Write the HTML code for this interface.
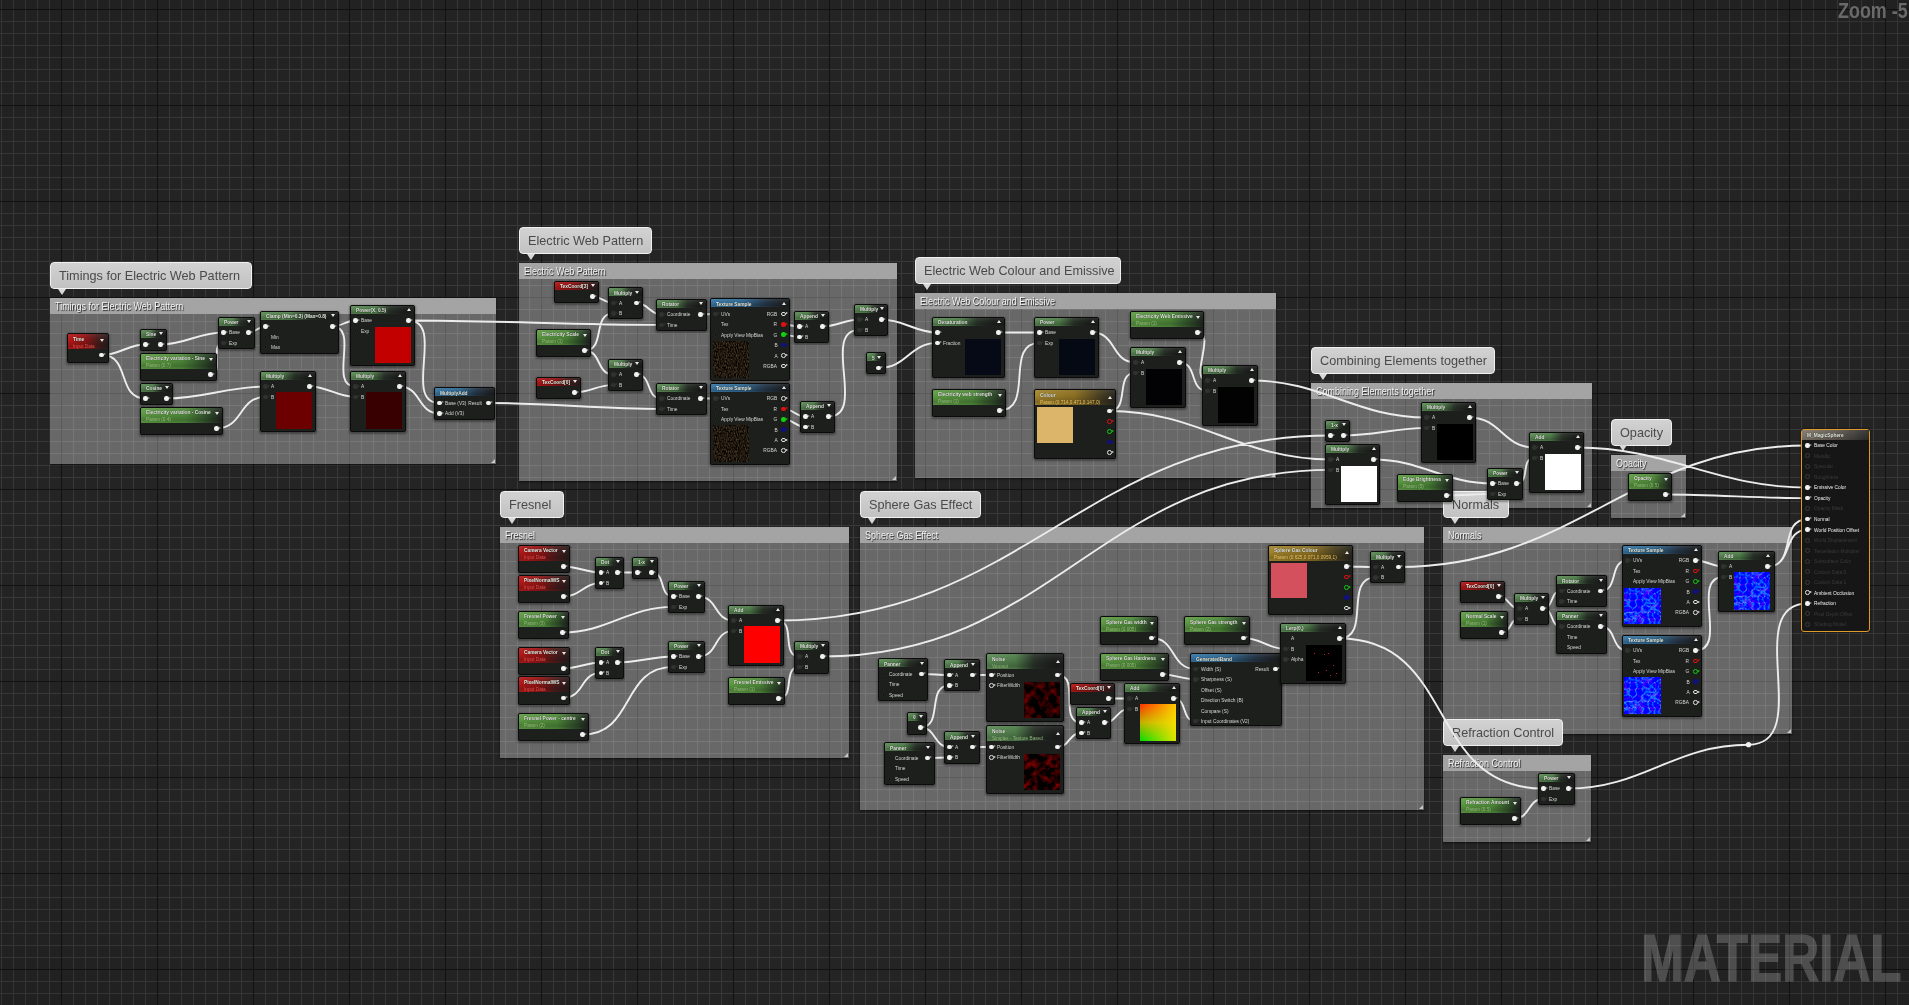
<!DOCTYPE html><html><head><meta charset="utf-8"><title>Material Graph</title><style>
*{margin:0;padding:0;box-sizing:border-box}
html,body{width:1909px;height:1005px;overflow:hidden;background:#242424}
body{position:relative;font-family:"Liberation Sans",sans-serif}
#bg{position:absolute;left:0;top:0;width:1909px;height:1005px;
background-image:
 linear-gradient(to right,#121212 1px,transparent 1px),
 linear-gradient(to bottom,#121212 1px,transparent 1px),
 linear-gradient(to right,#393939 1px,transparent 1px),
 linear-gradient(to bottom,#393939 1px,transparent 1px);
background-size:96px 96px,96px 96px,12px 12px,12px 12px;
background-position:61px 9px,61px 9px,1px 9px,1px 9px;}
.cb{position:absolute;background:rgba(255,255,255,0.315);box-shadow:0 1px 2px rgba(0,0,0,.6)}
.ch{position:absolute;left:0;top:0;right:0;height:16px;background:#a4a4a4}
.ct{position:absolute;left:5px;top:2px;font-size:10.5px;color:#f4f4f4;white-space:nowrap;text-shadow:1px 1px 1px #1a1a1a;transform:scaleX(.855);transform-origin:0 0}
.bb{position:absolute;background:linear-gradient(#d2d2d2,#c2c2c2);border:1px solid #f0f0f0;border-radius:4px;}
.bt{position:absolute;left:8.3px;top:5px;font-size:13px;color:#4a4a4a;white-space:nowrap;transform:scaleX(.975);transform-origin:0 0}
.tail{position:absolute;width:0;height:0;border-left:4px solid transparent;border-right:4px solid transparent;border-top:6px solid #d8d8d8}
.grip{position:absolute;right:1px;bottom:1px;width:0;height:0;border-left:4px solid transparent;border-bottom:4px solid #c8c8c8}
.n{position:absolute;background:#1d1f1d;border:1px solid #0b0b0b;border-radius:2px;box-shadow:0 1px 2px 1px rgba(0,0,0,.35);overflow:hidden}
.h{position:absolute;left:0;top:0;right:0}
.t{position:absolute;left:5px;top:1.5px;font-size:5.8px;font-weight:bold;line-height:6px;color:#e8eee4;white-space:nowrap;text-shadow:0 0 1px #000;transform:scaleX(.83);transform-origin:0 0}
.st{position:absolute;left:5px;top:8.5px;font-size:5.6px;line-height:6px;white-space:nowrap;transform:scaleX(.84);transform-origin:0 0}
.tri{position:absolute;width:0;height:0;border-left:2.5px solid transparent;border-right:2.5px solid transparent}
.l{position:absolute;font-size:5.6px;line-height:6px;color:#d6d6d6;white-space:nowrap;transform:scaleX(.86);transform-origin:0 0}
.lr{transform-origin:100% 0}
.p{position:absolute;border-radius:50%}
.pa{position:absolute;width:0;height:0;border-top:1.5px solid transparent;border-bottom:1.5px solid transparent}
.pv{position:absolute}
</style></head><body><div id="bg"></div><div style="position:absolute;left:0;top:0;width:1909px;height:1005px;background:radial-gradient(ellipse 75% 75% at 50% 50%,rgba(0,0,0,0) 60%,rgba(0,0,0,.12) 100%)"></div><div class="cb" style="left:50px;top:298px;width:445.5px;height:166px"><div class="ch"><div class="ct">Timings for Electric Web Pattern</div></div><div class="grip"></div></div><div class="bb" style="left:50px;top:262.3px;width:202px;height:27px"><div class="bt">Timings for Electric Web Pattern</div></div><div class="tail" style="left:58px;top:288.8px"></div><div class="cb" style="left:519px;top:263px;width:377.5px;height:217.5px"><div class="ch"><div class="ct">Electric Web Pattern</div></div><div class="grip"></div></div><div class="bb" style="left:519px;top:227.3px;width:133px;height:27px"><div class="bt">Electric Web Pattern</div></div><div class="tail" style="left:527px;top:253.8px"></div><div class="cb" style="left:914.5px;top:293px;width:361px;height:185px"><div class="ch"><div class="ct">Electric Web Colour and Emissive</div></div><div class="grip"></div></div><div class="bb" style="left:914.5px;top:257.3px;width:206.5px;height:27px"><div class="bt">Electric Web Colour and Emissive</div></div><div class="tail" style="left:922.5px;top:283.8px"></div><div class="cb" style="left:1310.5px;top:383px;width:281px;height:124.5px"><div class="ch"><div class="ct">Combining Elements together</div></div><div class="grip"></div></div><div class="bb" style="left:1310.5px;top:347.3px;width:184.5px;height:27px"><div class="bt">Combining Elements together</div></div><div class="tail" style="left:1318.5px;top:373.8px"></div><div class="cb" style="left:1610.5px;top:454.5px;width:75px;height:63.5px"><div class="ch"><div class="ct">Opacity</div></div><div class="grip"></div></div><div class="bb" style="left:1610.5px;top:418.8px;width:61.5px;height:27px"><div class="bt">Opacity</div></div><div class="tail" style="left:1618.5px;top:445.3px"></div><div class="cb" style="left:500px;top:527px;width:348.5px;height:231px"><div class="ch"><div class="ct">Fresnel</div></div><div class="grip"></div></div><div class="bb" style="left:500px;top:491.3px;width:64px;height:27px"><div class="bt">Fresnel</div></div><div class="tail" style="left:508px;top:517.8px"></div><div class="cb" style="left:860px;top:527px;width:564px;height:282.5px"><div class="ch"><div class="ct">Sphere Gas Effect</div></div><div class="grip"></div></div><div class="bb" style="left:860px;top:491.3px;width:121px;height:27px"><div class="bt">Sphere Gas Effect</div></div><div class="tail" style="left:868px;top:517.8px"></div><div class="cb" style="left:1443px;top:527px;width:348.5px;height:206.5px"><div class="ch"><div class="ct">Normals</div></div><div class="grip"></div></div><div class="bb" style="left:1443px;top:491.3px;width:66px;height:27px"><div class="bt">Normals</div></div><div class="tail" style="left:1451px;top:517.8px"></div><div class="cb" style="left:1442.5px;top:755px;width:148px;height:86.5px"><div class="ch"><div class="ct">Refraction Control</div></div><div class="grip"></div></div><div class="bb" style="left:1442.5px;top:719.3px;width:120.5px;height:27px"><div class="bt">Refraction Control</div></div><div class="tail" style="left:1450.5px;top:745.8px"></div><svg style="position:absolute;left:0;top:0" width="1909" height="1005"><path d="M101.8 355C119.87 355 127.43 344.5 145.5 344.5M101.8 355C130.87 355 116.43 398.5 145.5 398.5M160.3 344.5C185.37 344.5 198.43 332.5 223.5 332.5M210.3 374.5C225.23 374.5 208.57 342.9 223.5 342.9M248.3 332.5C256.03 332.5 257.77 326.5 265.5 326.5M332.3 326.5C342.03 326.5 345.77 320.5 355.5 320.5M332.3 326.5C360.03 326.5 327.77 386.5 355.5 386.5M166.3 398.5C203.37 398.5 228.43 386.5 265.5 386.5M216.3 428.5C243.23 428.5 238.57 396.9 265.5 396.9M309.3 386.5C328.17 386.5 336.63 396.9 355.5 396.9M408.3 320.5C446.2 320.5 401.6 403 439.5 403M399.3 386.5C421.67 386.5 417.13 413.4 439.5 413.4M408.3 320.5C494.17 320.5 575.63 324.9 661.5 324.9M488.3 403C548 403 601.8 408.9 661.5 408.9M592.3 296.5C601.53 296.5 604.27 303 613.5 303M584.3 350.5C606.4 350.5 591.4 313.4 613.5 313.4M584.3 350.5C602.03 350.5 595.77 374.5 613.5 374.5M574.3 392.5C589.9 392.5 597.9 384.9 613.5 384.9M636.3 303C648.53 303 649.27 314.5 661.5 314.5M636.3 374.5C652.7 374.5 645.1 398.5 661.5 398.5M700.3 314.5C705.53 314.5 710.27 314 715.5 314M700.3 398.5C705.37 398.5 710.43 398.5 715.5 398.5M783.3 324.4C789.4 324.4 793.4 326.5 799.5 326.5M783.3 334.8C789.4 334.8 793.4 336.9 799.5 336.9M783.3 408.9C793.23 408.9 795.57 416.5 805.5 416.5M783.3 419.3C793.23 419.3 795.57 426.9 805.5 426.9M822.3 326.5C837.03 326.5 844.77 319.5 859.5 319.5M828.3 416.5C867.57 416.5 820.23 329.9 859.5 329.9M881.3 319.5C904.37 319.5 914.43 332.5 937.5 332.5M878.8 368C906.73 368 909.57 342.9 937.5 342.9M998.3 332.5C1012.03 332.5 1025.77 332.5 1039.5 332.5M999.3 410.5C1035.23 410.5 1003.57 342.9 1039.5 342.9M1092.3 332.5C1116.7 332.5 1111.1 362.5 1135.5 362.5M1109.3 411C1130.73 411 1114.07 372.9 1135.5 372.9M1197.3 332.5C1216.7 332.5 1188.1 380.5 1207.5 380.5M1179.3 362.5C1198.17 362.5 1188.63 390.9 1207.5 390.9M1251.3 380.5C1322.03 380.5 1355.77 417.5 1426.5 417.5M1109.3 411C1199.2 411 1240.6 459.5 1330.5 459.5M777.3 620.5C1023.37 620.5 1084.43 435.5 1330.5 435.5M1343.3 435.5C1373.57 435.5 1396.23 427.9 1426.5 427.9M822.3 656.5C1053.9 656.5 1098.9 469.9 1330.5 469.9M1373.3 459.5C1421.03 459.5 1444.77 483.5 1492.5 483.5M1446.3 495.5C1462.23 495.5 1476.57 493.9 1492.5 493.9M1516.3 483.5C1530.9 483.5 1519.9 457.9 1534.5 457.9M1469.3 417.5C1501.03 417.5 1502.77 447.5 1534.5 447.5M1577.3 447.5C1667.41 447.5 1717.39 487.62 1807.5 487.62M1665.3 494.5C1713.92 494.5 1758.88 498.15 1807.5 498.15M1398.3 567C1575.2 567 1630.6 445.5 1807.5 445.5M1767.8 566.5C1796.8 566.5 1778.5 519.21 1807.5 519.21M1767.8 566.5C1793.29 566.5 1782.01 529.74 1807.5 529.74M1568.3 788.5C1642.97 788.5 1673.83 744.7 1748.5 744.7M1748.5 744.7C1815.25 744.7 1740.75 603.45 1807.5 603.45M563.3 566.5C577.87 566.5 586.43 572.5 601 572.5M563.3 596.5C580.4 596.5 583.9 582.9 601 582.9M617.3 572.5C624.03 572.5 630.77 572.5 637.5 572.5M651.3 572.5C666.7 572.5 658.1 596.5 673.5 596.5M562.3 632.5C607.9 632.5 627.9 606.9 673.5 606.9M563.3 668.5C577.87 668.5 586.43 662.5 601 662.5M563.3 698C584.23 698 580.07 672.9 601 672.9M617.3 662.5C638.03 662.5 652.77 656.5 673.5 656.5M582.3 734.5C635.23 734.5 620.57 666.9 673.5 666.9M698.3 596.5C718.03 596.5 713.77 620.5 733.5 620.5M698.3 656.5C718.57 656.5 713.23 630.9 733.5 630.9M777.3 620.5C796.7 620.5 780.1 656.5 799.5 656.5M778.3 698.5C795.9 698.5 781.9 666.9 799.5 666.9M921.3 674C931.03 674 939.77 675 949.5 675M920.3 727.5C944.07 727.5 925.73 685.4 949.5 685.4M920.3 727.5C936.53 727.5 933.27 747 949.5 747M927.8 758C935.23 758 942.07 757.4 949.5 757.4M972.8 675C979.03 675 985.27 675 991.5 675M972.8 747C979.03 747 985.27 747 991.5 747M1057.3 675C1081.2 675 1057.6 722.5 1081.5 722.5M1057.3 747C1070.07 747 1068.73 732.9 1081.5 732.9M1108.3 698.5C1115.37 698.5 1122.43 698.5 1129.5 698.5M1104.3 722.5C1117.23 722.5 1116.57 708.9 1129.5 708.9M1151.3 638C1176.37 638 1170.43 669 1195.5 669M1162.3 674.5C1175 674.5 1182.8 679.4 1195.5 679.4M1173.3 698.5C1188.2 698.5 1180.6 721 1195.5 721M1243.3 638C1261 638 1267.8 648.9 1285.5 648.9M1275.3 669C1281.93 669 1278.87 659.3 1285.5 659.3M1346.3 566.5C1356.2 566.5 1365.6 567 1375.5 567M1339.3 638.5C1371.73 638.5 1343.07 577.4 1375.5 577.4M1339.3 638.5C1457.37 638.5 1425.43 788.5 1543.5 788.5M1498.3 596.5C1509.37 596.5 1508.43 608.5 1519.5 608.5M1501.3 632.5C1511.9 632.5 1508.9 618.9 1519.5 618.9M1542.3 608.5C1554.53 608.5 1549.27 591 1561.5 591M1542.3 608.5C1554.7 608.5 1549.1 626.5 1561.5 626.5M1600.3 591C1619.53 591 1608.27 560.5 1627.5 560.5M1600.3 626.5C1617.37 626.5 1610.43 650.5 1627.5 650.5M1695.3 560.5C1706.7 560.5 1712.1 566.5 1723.5 566.5M1695.3 650.5C1729.23 650.5 1689.57 576.9 1723.5 576.9M1514.3 818.5C1530.57 818.5 1527.23 798.9 1543.5 798.9" fill="none" stroke="#ececec" stroke-width="1.9" stroke-linecap="round"/><circle cx="1748.5" cy="744.7" r="2.6" fill="#f2f2f2"/></svg><svg width="0" height="0" style="position:absolute"><defs>
<filter id="fTex" x="0" y="0" width="100%" height="100%" color-interpolation-filters="sRGB"><feTurbulence type="fractalNoise" baseFrequency="0.9 0.5" numOctaves="2" seed="3"/><feColorMatrix type="matrix" values="0.55 0 0 0 -0.15  0.45 0 0 0 -0.13  0.28 0 0 0 -0.08  0 0 0 0 1"/></filter>
<filter id="fNoise" x="0" y="0" width="100%" height="100%" color-interpolation-filters="sRGB"><feTurbulence type="fractalNoise" baseFrequency="0.12" numOctaves="3" seed="7"/><feColorMatrix type="matrix" values="1.25 0 0 0 -0.52  0 0 0 0 0  0 0 0 0 0  0 0 0 0 1"/></filter>
<filter id="fNoise2" x="0" y="0" width="100%" height="100%" color-interpolation-filters="sRGB"><feTurbulence type="fractalNoise" baseFrequency="0.14" numOctaves="3" seed="11"/><feColorMatrix type="matrix" values="1.25 0 0 0 -0.5  0 0 0 0 0  0 0 0 0 0  0 0 0 0 1"/></filter>
<filter id="fNrm" x="0" y="0" width="100%" height="100%" color-interpolation-filters="sRGB"><feTurbulence type="turbulence" baseFrequency="0.16" numOctaves="2" seed="5"/><feColorMatrix type="matrix" values="-1.4 0 0 0 0.38  0 -1.8 0 0 0.55  0 0 0 0 1  0 0 0 0 1"/></filter>
</defs></svg><div class="n" style="left:67.2px;top:333.2px;width:41.6px;height:29.6px"><div class="h" style="height:15px;background:linear-gradient(180deg,rgba(255,255,255,.07) 0%,rgba(0,0,0,.0) 35%,rgba(0,0,0,.2) 80%,rgba(0,0,0,.08) 100%),linear-gradient(90deg,#b81a1a 0%,#921414 40%,#4a1c1c 75%,#2a1e1e 100%)"></div><div class="t">Time</div><div class="st" style="color:#e05050">Input Data</div><div class="tri" style="right:3.5px;top:4.5px;border-top:3px solid #e8e8e8"></div><div class="p" style="left:31.3px;top:18.5px;width:4.6px;height:4.6px;background:#f2f2f2"></div><div class="pa" style="left:35.9px;top:19.3px;border-left:2px solid #9a9a9a"></div></div><div class="n" style="left:139.7px;top:328.7px;width:27.6px;height:22.6px"><div class="h" style="height:8px;background:linear-gradient(180deg,rgba(255,255,255,.07) 0%,rgba(0,0,0,.0) 35%,rgba(0,0,0,.2) 80%,rgba(0,0,0,.08) 100%),linear-gradient(90deg,#5d8b57 0%,#4f7c4a 38%,#2a3329 62%,#1f211f 85%)"></div><div class="t">Sine</div><div class="tri" style="right:3.5px;top:2.5px;border-top:3px solid #e8e8e8"></div><div class="p" style="left:2.7px;top:12.5px;width:4.6px;height:4.6px;background:#f2f2f2"></div><div class="pa" style="left:7.3px;top:13.3px;border-left:2px solid #9a9a9a"></div><div class="p" style="left:17.3px;top:12.5px;width:4.6px;height:4.6px;background:#f2f2f2"></div><div class="pa" style="left:21.9px;top:13.3px;border-left:2px solid #9a9a9a"></div></div><div class="n" style="left:139.7px;top:352.7px;width:77.6px;height:28.6px"><div class="h" style="height:15px;background:linear-gradient(180deg,rgba(255,255,255,.07) 0%,rgba(0,0,0,.0) 35%,rgba(0,0,0,.2) 80%,rgba(0,0,0,.08) 100%),linear-gradient(90deg,#5f9c45 0%,#4f8a3a 55%,#2f4a2a 85%,#222622 100%)"></div><div class="t">Electricity variation - Sine</div><div class="st" style="color:#92bc78">Param (0.7)</div><div class="tri" style="right:3.5px;top:4.5px;border-top:3px solid #e8e8e8"></div><div class="p" style="left:67.3px;top:18.5px;width:4.6px;height:4.6px;background:#f2f2f2"></div><div class="pa" style="left:71.9px;top:19.3px;border-left:2px solid #9a9a9a"></div></div><div class="n" style="left:139.7px;top:382.7px;width:33.6px;height:22.6px"><div class="h" style="height:8px;background:linear-gradient(180deg,rgba(255,255,255,.07) 0%,rgba(0,0,0,.0) 35%,rgba(0,0,0,.2) 80%,rgba(0,0,0,.08) 100%),linear-gradient(90deg,#5d8b57 0%,#4f7c4a 38%,#2a3329 62%,#1f211f 85%)"></div><div class="t">Cosine</div><div class="tri" style="right:3.5px;top:2.5px;border-top:3px solid #e8e8e8"></div><div class="p" style="left:2.7px;top:12.5px;width:4.6px;height:4.6px;background:#f2f2f2"></div><div class="pa" style="left:7.3px;top:13.3px;border-left:2px solid #9a9a9a"></div><div class="p" style="left:23.3px;top:12.5px;width:4.6px;height:4.6px;background:#f2f2f2"></div><div class="pa" style="left:27.9px;top:13.3px;border-left:2px solid #9a9a9a"></div></div><div class="n" style="left:139.7px;top:406.7px;width:83.6px;height:28.6px"><div class="h" style="height:15px;background:linear-gradient(180deg,rgba(255,255,255,.07) 0%,rgba(0,0,0,.0) 35%,rgba(0,0,0,.2) 80%,rgba(0,0,0,.08) 100%),linear-gradient(90deg,#5f9c45 0%,#4f8a3a 55%,#2f4a2a 85%,#222622 100%)"></div><div class="t">Electricity variation - Cosine</div><div class="st" style="color:#92bc78">Param (0.4)</div><div class="tri" style="right:3.5px;top:4.5px;border-top:3px solid #e8e8e8"></div><div class="p" style="left:73.3px;top:18.5px;width:4.6px;height:4.6px;background:#f2f2f2"></div><div class="pa" style="left:77.9px;top:19.3px;border-left:2px solid #9a9a9a"></div></div><div class="n" style="left:217.7px;top:316.7px;width:37.6px;height:32.6px"><div class="h" style="height:8px;background:linear-gradient(180deg,rgba(255,255,255,.07) 0%,rgba(0,0,0,.0) 35%,rgba(0,0,0,.2) 80%,rgba(0,0,0,.08) 100%),linear-gradient(90deg,#5d8b57 0%,#4f7c4a 38%,#2a3329 62%,#1f211f 85%)"></div><div class="t">Power</div><div class="tri" style="right:3.5px;top:2.5px;border-top:3px solid #e8e8e8"></div><div class="p" style="left:2.7px;top:12.5px;width:4.6px;height:4.6px;background:#f2f2f2"></div><div class="pa" style="left:7.3px;top:13.3px;border-left:2px solid #9a9a9a"></div><div class="l" style="left:10px;top:11.8px">Base</div><div class="p" style="left:27.3px;top:12.5px;width:4.6px;height:4.6px;background:#f2f2f2"></div><div class="pa" style="left:31.9px;top:13.3px;border-left:2px solid #9a9a9a"></div><div class="p" style="left:2.7px;top:22.9px;width:4.6px;height:4.6px;background:#303230"></div><div class="pa" style="left:7.3px;top:23.7px;border-left:2px solid #303230"></div><div class="l" style="left:10px;top:22.2px">Exp</div></div><div class="n" style="left:259.7px;top:310.7px;width:79.6px;height:43.6px"><div class="h" style="height:8px;background:linear-gradient(180deg,rgba(255,255,255,.07) 0%,rgba(0,0,0,.0) 35%,rgba(0,0,0,.2) 80%,rgba(0,0,0,.08) 100%),linear-gradient(90deg,#5d8b57 0%,#4f7c4a 38%,#2a3329 62%,#1f211f 85%)"></div><div class="t">Clamp (Min=0.3) (Max=0.8)</div><div class="tri" style="right:3.5px;top:2.5px;border-top:3px solid #e8e8e8"></div><div class="p" style="left:2.7px;top:12.5px;width:4.6px;height:4.6px;background:#f2f2f2"></div><div class="pa" style="left:7.3px;top:13.3px;border-left:2px solid #9a9a9a"></div><div class="p" style="left:69.3px;top:12.5px;width:4.6px;height:4.6px;background:#f2f2f2"></div><div class="pa" style="left:73.9px;top:13.3px;border-left:2px solid #9a9a9a"></div><div class="p" style="left:3.2px;top:23.4px;width:3.6px;height:3.6px;background:#0c0c0c;border:0.7px solid #2a2a2a"></div><div class="l" style="left:10px;top:22.2px">Min</div><div class="p" style="left:3.2px;top:33.8px;width:3.6px;height:3.6px;background:#0c0c0c;border:0.7px solid #2a2a2a"></div><div class="l" style="left:10px;top:32.6px">Max</div></div><div class="n" style="left:349.7px;top:304.7px;width:65.6px;height:61.6px"><div class="h" style="height:8px;background:linear-gradient(180deg,rgba(255,255,255,.07) 0%,rgba(0,0,0,.0) 35%,rgba(0,0,0,.2) 80%,rgba(0,0,0,.08) 100%),linear-gradient(90deg,#5d8b57 0%,#4f7c4a 38%,#2a3329 62%,#1f211f 85%)"></div><div class="t">Power(X, 0.5)</div><div class="tri" style="right:3.5px;top:2.5px;border-bottom:3px solid #e8e8e8"></div><div class="pv" style="left:24.3px;top:21.3px;width:36px;height:36px;background:#c20000"></div><div class="p" style="left:2.7px;top:12.5px;width:4.6px;height:4.6px;background:#f2f2f2"></div><div class="pa" style="left:7.3px;top:13.3px;border-left:2px solid #9a9a9a"></div><div class="l" style="left:10px;top:11.8px">Base</div><div class="p" style="left:55.3px;top:12.5px;width:4.6px;height:4.6px;background:#f2f2f2"></div><div class="pa" style="left:59.9px;top:13.3px;border-left:2px solid #9a9a9a"></div><div class="p" style="left:3.2px;top:23.4px;width:3.6px;height:3.6px;background:#0c0c0c;border:0.7px solid #2a2a2a"></div><div class="l" style="left:10px;top:22.2px">Exp</div></div><div class="n" style="left:259.7px;top:370.7px;width:56.6px;height:61.6px"><div class="h" style="height:8px;background:linear-gradient(180deg,rgba(255,255,255,.07) 0%,rgba(0,0,0,.0) 35%,rgba(0,0,0,.2) 80%,rgba(0,0,0,.08) 100%),linear-gradient(90deg,#5d8b57 0%,#4f7c4a 38%,#2a3329 62%,#1f211f 85%)"></div><div class="t">Multiply</div><div class="tri" style="right:3.5px;top:2.5px;border-bottom:3px solid #e8e8e8"></div><div class="pv" style="left:15.3px;top:20.8px;width:36.5px;height:37px;background:#6c0000"></div><div class="p" style="left:2.7px;top:12.5px;width:4.6px;height:4.6px;background:#303230"></div><div class="pa" style="left:7.3px;top:13.3px;border-left:2px solid #303230"></div><div class="l" style="left:10px;top:11.8px">A</div><div class="p" style="left:46.3px;top:12.5px;width:4.6px;height:4.6px;background:#f2f2f2"></div><div class="pa" style="left:50.9px;top:13.3px;border-left:2px solid #9a9a9a"></div><div class="p" style="left:2.7px;top:22.9px;width:4.6px;height:4.6px;background:#303230"></div><div class="pa" style="left:7.3px;top:23.7px;border-left:2px solid #303230"></div><div class="l" style="left:10px;top:22.2px">B</div></div><div class="n" style="left:349.7px;top:370.7px;width:56.6px;height:61.6px"><div class="h" style="height:8px;background:linear-gradient(180deg,rgba(255,255,255,.07) 0%,rgba(0,0,0,.0) 35%,rgba(0,0,0,.2) 80%,rgba(0,0,0,.08) 100%),linear-gradient(90deg,#5d8b57 0%,#4f7c4a 38%,#2a3329 62%,#1f211f 85%)"></div><div class="t">Multiply</div><div class="tri" style="right:3.5px;top:2.5px;border-bottom:3px solid #e8e8e8"></div><div class="pv" style="left:15.3px;top:20.8px;width:36.5px;height:37px;background:#380000"></div><div class="p" style="left:2.7px;top:12.5px;width:4.6px;height:4.6px;background:#303230"></div><div class="pa" style="left:7.3px;top:13.3px;border-left:2px solid #303230"></div><div class="l" style="left:10px;top:11.8px">A</div><div class="p" style="left:46.3px;top:12.5px;width:4.6px;height:4.6px;background:#f2f2f2"></div><div class="pa" style="left:50.9px;top:13.3px;border-left:2px solid #9a9a9a"></div><div class="p" style="left:2.7px;top:22.9px;width:4.6px;height:4.6px;background:#303230"></div><div class="pa" style="left:7.3px;top:23.7px;border-left:2px solid #303230"></div><div class="l" style="left:10px;top:22.2px">B</div></div><div class="n" style="left:433.7px;top:387.2px;width:61.6px;height:32.6px"><div class="h" style="height:8px;background:linear-gradient(180deg,rgba(255,255,255,.07) 0%,rgba(0,0,0,.0) 35%,rgba(0,0,0,.2) 80%,rgba(0,0,0,.08) 100%),linear-gradient(90deg,#3a78a6 0%,#30688f 40%,#27384a 70%,#1f2224 95%)"></div><div class="t">MultiplyAdd</div><div class="p" style="left:2.7px;top:12.5px;width:4.6px;height:4.6px;background:#f2f2f2"></div><div class="pa" style="left:7.3px;top:13.3px;border-left:2px solid #9a9a9a"></div><div class="l" style="left:10px;top:11.8px">Base (V3)</div><div class="p" style="left:51.3px;top:12.5px;width:4.6px;height:4.6px;background:#f2f2f2"></div><div class="pa" style="left:55.9px;top:13.3px;border-left:2px solid #9a9a9a"></div><div class="l lr" style="right:12px;top:11.8px">Result</div><div class="p" style="left:2.7px;top:22.9px;width:4.6px;height:4.6px;background:#f2f2f2"></div><div class="pa" style="left:7.3px;top:23.7px;border-left:2px solid #9a9a9a"></div><div class="l" style="left:10px;top:22.2px">Add (V3)</div></div><div class="n" style="left:553.7px;top:280.7px;width:45.6px;height:22.6px"><div class="h" style="height:8px;background:linear-gradient(180deg,rgba(255,255,255,.07) 0%,rgba(0,0,0,.0) 35%,rgba(0,0,0,.2) 80%,rgba(0,0,0,.08) 100%),linear-gradient(90deg,#b81a1a 0%,#921414 40%,#4a1c1c 75%,#2a1e1e 100%)"></div><div class="t">TexCoord[3]</div><div class="tri" style="right:3.5px;top:2.5px;border-top:3px solid #e8e8e8"></div><div class="p" style="left:35.3px;top:12.5px;width:4.6px;height:4.6px;background:#f2f2f2"></div><div class="pa" style="left:39.9px;top:13.3px;border-left:2px solid #9a9a9a"></div></div><div class="n" style="left:607.7px;top:287.2px;width:35.6px;height:32.1px"><div class="h" style="height:8px;background:linear-gradient(180deg,rgba(255,255,255,.07) 0%,rgba(0,0,0,.0) 35%,rgba(0,0,0,.2) 80%,rgba(0,0,0,.08) 100%),linear-gradient(90deg,#5d8b57 0%,#4f7c4a 38%,#2a3329 62%,#1f211f 85%)"></div><div class="t">Multiply</div><div class="tri" style="right:3.5px;top:2.5px;border-top:3px solid #e8e8e8"></div><div class="p" style="left:2.7px;top:12.5px;width:4.6px;height:4.6px;background:#303230"></div><div class="pa" style="left:7.3px;top:13.3px;border-left:2px solid #303230"></div><div class="l" style="left:10px;top:11.8px">A</div><div class="p" style="left:25.3px;top:12.5px;width:4.6px;height:4.6px;background:#f2f2f2"></div><div class="pa" style="left:29.9px;top:13.3px;border-left:2px solid #9a9a9a"></div><div class="p" style="left:2.7px;top:22.9px;width:4.6px;height:4.6px;background:#303230"></div><div class="pa" style="left:7.3px;top:23.7px;border-left:2px solid #303230"></div><div class="l" style="left:10px;top:22.2px">B</div></div><div class="n" style="left:655.7px;top:298.7px;width:51.6px;height:32.6px"><div class="h" style="height:8px;background:linear-gradient(180deg,rgba(255,255,255,.07) 0%,rgba(0,0,0,.0) 35%,rgba(0,0,0,.2) 80%,rgba(0,0,0,.08) 100%),linear-gradient(90deg,#5d8b57 0%,#4f7c4a 38%,#2a3329 62%,#1f211f 85%)"></div><div class="t">Rotator</div><div class="tri" style="right:3.5px;top:2.5px;border-top:3px solid #e8e8e8"></div><div class="p" style="left:2.7px;top:12.5px;width:4.6px;height:4.6px;background:#303230"></div><div class="pa" style="left:7.3px;top:13.3px;border-left:2px solid #303230"></div><div class="l" style="left:10px;top:11.8px">Coordinate</div><div class="p" style="left:41.3px;top:12.5px;width:4.6px;height:4.6px;background:#f2f2f2"></div><div class="pa" style="left:45.9px;top:13.3px;border-left:2px solid #9a9a9a"></div><div class="p" style="left:2.7px;top:22.9px;width:4.6px;height:4.6px;background:#303230"></div><div class="pa" style="left:7.3px;top:23.7px;border-left:2px solid #303230"></div><div class="l" style="left:10px;top:22.2px">Time</div></div><div class="n" style="left:535.7px;top:328.7px;width:55.6px;height:28.6px"><div class="h" style="height:15px;background:linear-gradient(180deg,rgba(255,255,255,.07) 0%,rgba(0,0,0,.0) 35%,rgba(0,0,0,.2) 80%,rgba(0,0,0,.08) 100%),linear-gradient(90deg,#5f9c45 0%,#4f8a3a 55%,#2f4a2a 85%,#222622 100%)"></div><div class="t">Electricity Scale</div><div class="st" style="color:#92bc78">Param (1)</div><div class="tri" style="right:3.5px;top:4.5px;border-top:3px solid #e8e8e8"></div><div class="p" style="left:45.3px;top:18.5px;width:4.6px;height:4.6px;background:#f2f2f2"></div><div class="pa" style="left:49.9px;top:19.3px;border-left:2px solid #9a9a9a"></div></div><div class="n" style="left:607.7px;top:358.7px;width:35.6px;height:32.6px"><div class="h" style="height:8px;background:linear-gradient(180deg,rgba(255,255,255,.07) 0%,rgba(0,0,0,.0) 35%,rgba(0,0,0,.2) 80%,rgba(0,0,0,.08) 100%),linear-gradient(90deg,#5d8b57 0%,#4f7c4a 38%,#2a3329 62%,#1f211f 85%)"></div><div class="t">Multiply</div><div class="tri" style="right:3.5px;top:2.5px;border-top:3px solid #e8e8e8"></div><div class="p" style="left:2.7px;top:12.5px;width:4.6px;height:4.6px;background:#303230"></div><div class="pa" style="left:7.3px;top:13.3px;border-left:2px solid #303230"></div><div class="l" style="left:10px;top:11.8px">A</div><div class="p" style="left:25.3px;top:12.5px;width:4.6px;height:4.6px;background:#f2f2f2"></div><div class="pa" style="left:29.9px;top:13.3px;border-left:2px solid #9a9a9a"></div><div class="p" style="left:2.7px;top:22.9px;width:4.6px;height:4.6px;background:#303230"></div><div class="pa" style="left:7.3px;top:23.7px;border-left:2px solid #303230"></div><div class="l" style="left:10px;top:22.2px">B</div></div><div class="n" style="left:535.7px;top:376.7px;width:45.6px;height:22.6px"><div class="h" style="height:8px;background:linear-gradient(180deg,rgba(255,255,255,.07) 0%,rgba(0,0,0,.0) 35%,rgba(0,0,0,.2) 80%,rgba(0,0,0,.08) 100%),linear-gradient(90deg,#b81a1a 0%,#921414 40%,#4a1c1c 75%,#2a1e1e 100%)"></div><div class="t">TexCoord[0]</div><div class="tri" style="right:3.5px;top:2.5px;border-top:3px solid #e8e8e8"></div><div class="p" style="left:35.3px;top:12.5px;width:4.6px;height:4.6px;background:#f2f2f2"></div><div class="pa" style="left:39.9px;top:13.3px;border-left:2px solid #9a9a9a"></div></div><div class="n" style="left:655.7px;top:382.7px;width:51.6px;height:32.6px"><div class="h" style="height:8px;background:linear-gradient(180deg,rgba(255,255,255,.07) 0%,rgba(0,0,0,.0) 35%,rgba(0,0,0,.2) 80%,rgba(0,0,0,.08) 100%),linear-gradient(90deg,#5d8b57 0%,#4f7c4a 38%,#2a3329 62%,#1f211f 85%)"></div><div class="t">Rotator</div><div class="tri" style="right:3.5px;top:2.5px;border-top:3px solid #e8e8e8"></div><div class="p" style="left:2.7px;top:12.5px;width:4.6px;height:4.6px;background:#303230"></div><div class="pa" style="left:7.3px;top:13.3px;border-left:2px solid #303230"></div><div class="l" style="left:10px;top:11.8px">Coordinate</div><div class="p" style="left:41.3px;top:12.5px;width:4.6px;height:4.6px;background:#f2f2f2"></div><div class="pa" style="left:45.9px;top:13.3px;border-left:2px solid #9a9a9a"></div><div class="p" style="left:2.7px;top:22.9px;width:4.6px;height:4.6px;background:#303230"></div><div class="pa" style="left:7.3px;top:23.7px;border-left:2px solid #303230"></div><div class="l" style="left:10px;top:22.2px">Time</div></div><div class="n" style="left:709.7px;top:298.2px;width:80.6px;height:83.1px"><div class="h" style="height:8px;background:linear-gradient(180deg,rgba(255,255,255,.07) 0%,rgba(0,0,0,.0) 35%,rgba(0,0,0,.2) 80%,rgba(0,0,0,.08) 100%),linear-gradient(90deg,#3a78a6 0%,#30688f 40%,#27384a 70%,#1f2224 95%)"></div><div class="t">Texture Sample</div><div class="tri" style="right:3.5px;top:2.5px;border-bottom:3px solid #e8e8e8"></div><svg class="pv" style="left:2.3px;top:42.3px;width:36.5px;height:36.5px;" width="36.5" height="36.5"><rect width="100%" height="100%" fill="#000" filter="url(#fTex)"/></svg><div class="p" style="left:2.7px;top:12.5px;width:4.6px;height:4.6px;background:#303230"></div><div class="pa" style="left:7.3px;top:13.3px;border-left:2px solid #303230"></div><div class="l" style="left:10px;top:11.8px">UVs</div><div class="p" style="left:70.3px;top:12.5px;width:4.6px;height:4.6px;border:0.9px solid #e6e6e6"></div><div class="pa" style="left:74.9px;top:13.3px;border-left:2px solid #e6e6e6"></div><div class="l lr" style="right:12px;top:11.8px">RGB</div><div class="p" style="left:3.2px;top:23.4px;width:3.6px;height:3.6px;background:#0c0c0c;border:0.7px solid #2a2a2a"></div><div class="l" style="left:10px;top:22.2px">Tex</div><div class="p" style="left:70.3px;top:22.9px;width:4.6px;height:4.6px;background:#e01010"></div><div class="pa" style="left:74.9px;top:23.7px;border-left:2px solid #e01010"></div><div class="l lr" style="right:12px;top:22.2px">R</div><div class="p" style="left:3.2px;top:33.8px;width:3.6px;height:3.6px;background:#0c0c0c;border:0.7px solid #2a2a2a"></div><div class="l" style="left:10px;top:32.6px">Apply View MipBias</div><div class="p" style="left:70.3px;top:33.3px;width:4.6px;height:4.6px;background:#10d010"></div><div class="pa" style="left:74.9px;top:34.1px;border-left:2px solid #10d010"></div><div class="l lr" style="right:12px;top:32.6px">G</div><div class="p" style="left:70.3px;top:43.7px;width:4.6px;height:4.6px;background:#101080"></div><div class="pa" style="left:74.9px;top:44.5px;border-left:2px solid #101080"></div><div class="l lr" style="right:12px;top:43px">B</div><div class="p" style="left:70.3px;top:54.1px;width:4.6px;height:4.6px;border:0.9px solid #e6e6e6"></div><div class="pa" style="left:74.9px;top:54.9px;border-left:2px solid #e6e6e6"></div><div class="l lr" style="right:12px;top:53.4px">A</div><div class="p" style="left:70.3px;top:64.5px;width:4.6px;height:4.6px;border:0.9px solid #e6e6e6"></div><div class="pa" style="left:74.9px;top:65.3px;border-left:2px solid #e6e6e6"></div><div class="l lr" style="right:12px;top:63.8px">RGBA</div></div><div class="n" style="left:709.7px;top:382.7px;width:80.6px;height:82.6px"><div class="h" style="height:8px;background:linear-gradient(180deg,rgba(255,255,255,.07) 0%,rgba(0,0,0,.0) 35%,rgba(0,0,0,.2) 80%,rgba(0,0,0,.08) 100%),linear-gradient(90deg,#3a78a6 0%,#30688f 40%,#27384a 70%,#1f2224 95%)"></div><div class="t">Texture Sample</div><div class="tri" style="right:3.5px;top:2.5px;border-bottom:3px solid #e8e8e8"></div><svg class="pv" style="left:2.3px;top:41.8px;width:36.5px;height:36.5px;" width="36.5" height="36.5"><rect width="100%" height="100%" fill="#000" filter="url(#fTex)"/></svg><div class="p" style="left:2.7px;top:12.5px;width:4.6px;height:4.6px;background:#303230"></div><div class="pa" style="left:7.3px;top:13.3px;border-left:2px solid #303230"></div><div class="l" style="left:10px;top:11.8px">UVs</div><div class="p" style="left:70.3px;top:12.5px;width:4.6px;height:4.6px;border:0.9px solid #e6e6e6"></div><div class="pa" style="left:74.9px;top:13.3px;border-left:2px solid #e6e6e6"></div><div class="l lr" style="right:12px;top:11.8px">RGB</div><div class="p" style="left:3.2px;top:23.4px;width:3.6px;height:3.6px;background:#0c0c0c;border:0.7px solid #2a2a2a"></div><div class="l" style="left:10px;top:22.2px">Tex</div><div class="p" style="left:70.3px;top:22.9px;width:4.6px;height:4.6px;background:#e01010"></div><div class="pa" style="left:74.9px;top:23.7px;border-left:2px solid #e01010"></div><div class="l lr" style="right:12px;top:22.2px">R</div><div class="p" style="left:3.2px;top:33.8px;width:3.6px;height:3.6px;background:#0c0c0c;border:0.7px solid #2a2a2a"></div><div class="l" style="left:10px;top:32.6px">Apply View MipBias</div><div class="p" style="left:70.3px;top:33.3px;width:4.6px;height:4.6px;background:#10d010"></div><div class="pa" style="left:74.9px;top:34.1px;border-left:2px solid #10d010"></div><div class="l lr" style="right:12px;top:32.6px">G</div><div class="p" style="left:70.3px;top:43.7px;width:4.6px;height:4.6px;background:#101080"></div><div class="pa" style="left:74.9px;top:44.5px;border-left:2px solid #101080"></div><div class="l lr" style="right:12px;top:43px">B</div><div class="p" style="left:70.3px;top:54.1px;width:4.6px;height:4.6px;border:0.9px solid #e6e6e6"></div><div class="pa" style="left:74.9px;top:54.9px;border-left:2px solid #e6e6e6"></div><div class="l lr" style="right:12px;top:53.4px">A</div><div class="p" style="left:70.3px;top:64.5px;width:4.6px;height:4.6px;border:0.9px solid #e6e6e6"></div><div class="pa" style="left:74.9px;top:65.3px;border-left:2px solid #e6e6e6"></div><div class="l lr" style="right:12px;top:63.8px">RGBA</div></div><div class="n" style="left:793.7px;top:310.7px;width:35.6px;height:32.6px"><div class="h" style="height:8px;background:linear-gradient(180deg,rgba(255,255,255,.07) 0%,rgba(0,0,0,.0) 35%,rgba(0,0,0,.2) 80%,rgba(0,0,0,.08) 100%),linear-gradient(90deg,#5d8b57 0%,#4f7c4a 38%,#2a3329 62%,#1f211f 85%)"></div><div class="t">Append</div><div class="tri" style="right:3.5px;top:2.5px;border-top:3px solid #e8e8e8"></div><div class="p" style="left:2.7px;top:12.5px;width:4.6px;height:4.6px;background:#f2f2f2"></div><div class="pa" style="left:7.3px;top:13.3px;border-left:2px solid #9a9a9a"></div><div class="l" style="left:10px;top:11.8px">A</div><div class="p" style="left:25.3px;top:12.5px;width:4.6px;height:4.6px;background:#f2f2f2"></div><div class="pa" style="left:29.9px;top:13.3px;border-left:2px solid #9a9a9a"></div><div class="p" style="left:2.7px;top:22.9px;width:4.6px;height:4.6px;background:#f2f2f2"></div><div class="pa" style="left:7.3px;top:23.7px;border-left:2px solid #9a9a9a"></div><div class="l" style="left:10px;top:22.2px">B</div></div><div class="n" style="left:799.7px;top:400.7px;width:35.6px;height:32.6px"><div class="h" style="height:8px;background:linear-gradient(180deg,rgba(255,255,255,.07) 0%,rgba(0,0,0,.0) 35%,rgba(0,0,0,.2) 80%,rgba(0,0,0,.08) 100%),linear-gradient(90deg,#5d8b57 0%,#4f7c4a 38%,#2a3329 62%,#1f211f 85%)"></div><div class="t">Append</div><div class="tri" style="right:3.5px;top:2.5px;border-top:3px solid #e8e8e8"></div><div class="p" style="left:2.7px;top:12.5px;width:4.6px;height:4.6px;background:#f2f2f2"></div><div class="pa" style="left:7.3px;top:13.3px;border-left:2px solid #9a9a9a"></div><div class="l" style="left:10px;top:11.8px">A</div><div class="p" style="left:25.3px;top:12.5px;width:4.6px;height:4.6px;background:#f2f2f2"></div><div class="pa" style="left:29.9px;top:13.3px;border-left:2px solid #9a9a9a"></div><div class="p" style="left:2.7px;top:22.9px;width:4.6px;height:4.6px;background:#f2f2f2"></div><div class="pa" style="left:7.3px;top:23.7px;border-left:2px solid #9a9a9a"></div><div class="l" style="left:10px;top:22.2px">B</div></div><div class="n" style="left:853.7px;top:303.7px;width:34.6px;height:32.1px"><div class="h" style="height:8px;background:linear-gradient(180deg,rgba(255,255,255,.07) 0%,rgba(0,0,0,.0) 35%,rgba(0,0,0,.2) 80%,rgba(0,0,0,.08) 100%),linear-gradient(90deg,#5d8b57 0%,#4f7c4a 38%,#2a3329 62%,#1f211f 85%)"></div><div class="t">Multiply</div><div class="tri" style="right:3.5px;top:2.5px;border-top:3px solid #e8e8e8"></div><div class="p" style="left:2.7px;top:12.5px;width:4.6px;height:4.6px;background:#303230"></div><div class="pa" style="left:7.3px;top:13.3px;border-left:2px solid #303230"></div><div class="l" style="left:10px;top:11.8px">A</div><div class="p" style="left:24.3px;top:12.5px;width:4.6px;height:4.6px;background:#f2f2f2"></div><div class="pa" style="left:28.9px;top:13.3px;border-left:2px solid #9a9a9a"></div><div class="p" style="left:2.7px;top:22.9px;width:4.6px;height:4.6px;background:#303230"></div><div class="pa" style="left:7.3px;top:23.7px;border-left:2px solid #303230"></div><div class="l" style="left:10px;top:22.2px">B</div></div><div class="n" style="left:865.7px;top:352.2px;width:20.1px;height:22.1px"><div class="h" style="height:8px;background:linear-gradient(180deg,rgba(255,255,255,.07) 0%,rgba(0,0,0,.0) 35%,rgba(0,0,0,.2) 80%,rgba(0,0,0,.08) 100%),linear-gradient(90deg,#5d8b57 0%,#4f7c4a 38%,#2a3329 62%,#1f211f 85%)"></div><div class="t">5</div><div class="tri" style="right:3.5px;top:2.5px;border-top:3px solid #e8e8e8"></div><div class="p" style="left:9.8px;top:12.5px;width:4.6px;height:4.6px;background:#f2f2f2"></div><div class="pa" style="left:14.4px;top:13.3px;border-left:2px solid #9a9a9a"></div></div><div class="n" style="left:931.7px;top:316.7px;width:73.6px;height:61.6px"><div class="h" style="height:8px;background:linear-gradient(180deg,rgba(255,255,255,.07) 0%,rgba(0,0,0,.0) 35%,rgba(0,0,0,.2) 80%,rgba(0,0,0,.08) 100%),linear-gradient(90deg,#5d8b57 0%,#4f7c4a 38%,#2a3329 62%,#1f211f 85%)"></div><div class="t">Desaturation</div><div class="tri" style="right:3.5px;top:2.5px;border-bottom:3px solid #e8e8e8"></div><div class="pv" style="left:32.3px;top:21.3px;width:36px;height:36px;background:#050a16"></div><div class="p" style="left:2.7px;top:12.5px;width:4.6px;height:4.6px;background:#f2f2f2"></div><div class="pa" style="left:7.3px;top:13.3px;border-left:2px solid #9a9a9a"></div><div class="p" style="left:63.3px;top:12.5px;width:4.6px;height:4.6px;background:#f2f2f2"></div><div class="pa" style="left:67.9px;top:13.3px;border-left:2px solid #9a9a9a"></div><div class="p" style="left:2.7px;top:22.9px;width:4.6px;height:4.6px;background:#f2f2f2"></div><div class="pa" style="left:7.3px;top:23.7px;border-left:2px solid #9a9a9a"></div><div class="l" style="left:10px;top:22.2px">Fraction</div></div><div class="n" style="left:1033.7px;top:316.7px;width:65.6px;height:61.6px"><div class="h" style="height:8px;background:linear-gradient(180deg,rgba(255,255,255,.07) 0%,rgba(0,0,0,.0) 35%,rgba(0,0,0,.2) 80%,rgba(0,0,0,.08) 100%),linear-gradient(90deg,#5d8b57 0%,#4f7c4a 38%,#2a3329 62%,#1f211f 85%)"></div><div class="t">Power</div><div class="tri" style="right:3.5px;top:2.5px;border-bottom:3px solid #e8e8e8"></div><div class="pv" style="left:24.8px;top:21.3px;width:35.5px;height:36px;background:#040914"></div><div class="p" style="left:2.7px;top:12.5px;width:4.6px;height:4.6px;background:#f2f2f2"></div><div class="pa" style="left:7.3px;top:13.3px;border-left:2px solid #9a9a9a"></div><div class="l" style="left:10px;top:11.8px">Base</div><div class="p" style="left:55.3px;top:12.5px;width:4.6px;height:4.6px;background:#f2f2f2"></div><div class="pa" style="left:59.9px;top:13.3px;border-left:2px solid #9a9a9a"></div><div class="p" style="left:2.7px;top:22.9px;width:4.6px;height:4.6px;background:#303230"></div><div class="pa" style="left:7.3px;top:23.7px;border-left:2px solid #303230"></div><div class="l" style="left:10px;top:22.2px">Exp</div></div><div class="n" style="left:931.7px;top:388.7px;width:74.6px;height:28.6px"><div class="h" style="height:15px;background:linear-gradient(180deg,rgba(255,255,255,.07) 0%,rgba(0,0,0,.0) 35%,rgba(0,0,0,.2) 80%,rgba(0,0,0,.08) 100%),linear-gradient(90deg,#5f9c45 0%,#4f8a3a 55%,#2f4a2a 85%,#222622 100%)"></div><div class="t">Electricity web strength</div><div class="st" style="color:#92bc78">Param (1)</div><div class="tri" style="right:3.5px;top:4.5px;border-top:3px solid #e8e8e8"></div><div class="p" style="left:64.3px;top:18.5px;width:4.6px;height:4.6px;background:#f2f2f2"></div><div class="pa" style="left:68.9px;top:19.3px;border-left:2px solid #9a9a9a"></div></div><div class="n" style="left:1033.7px;top:389.2px;width:82.6px;height:69.6px"><div class="h" style="height:15px;background:linear-gradient(180deg,rgba(255,255,255,.07) 0%,rgba(0,0,0,.0) 35%,rgba(0,0,0,.2) 80%,rgba(0,0,0,.08) 100%),linear-gradient(90deg,#a4862e 0%,#8a6e22 50%,#4a4020 80%,#2a2820 100%)"></div><div class="t">Colour</div><div class="st" style="color:#e8c060">Param (0.714,0.471,0.147,0)</div><div class="tri" style="right:3.5px;top:5.5px;border-bottom:3px solid #e8e8e8"></div><div class="pv" style="left:2.8px;top:16.8px;width:36px;height:36px;background:#dcb46a"></div><div class="p" style="left:72.3px;top:18.5px;width:4.6px;height:4.6px;background:#f2f2f2"></div><div class="pa" style="left:76.9px;top:19.3px;border-left:2px solid #9a9a9a"></div><div class="p" style="left:72.3px;top:28.9px;width:4.6px;height:4.6px;border:0.9px solid #e01010"></div><div class="pa" style="left:76.9px;top:29.7px;border-left:2px solid #e01010"></div><div class="p" style="left:72.3px;top:39.3px;width:4.6px;height:4.6px;border:0.9px solid #10d010"></div><div class="pa" style="left:76.9px;top:40.1px;border-left:2px solid #10d010"></div><div class="p" style="left:72.3px;top:49.7px;width:4.6px;height:4.6px;background:#101080"></div><div class="pa" style="left:76.9px;top:50.5px;border-left:2px solid #101080"></div><div class="p" style="left:72.3px;top:60.1px;width:4.6px;height:4.6px;border:0.9px solid #e6e6e6"></div><div class="pa" style="left:76.9px;top:60.9px;border-left:2px solid #e6e6e6"></div></div><div class="n" style="left:1129.7px;top:310.7px;width:74.6px;height:28.6px"><div class="h" style="height:15px;background:linear-gradient(180deg,rgba(255,255,255,.07) 0%,rgba(0,0,0,.0) 35%,rgba(0,0,0,.2) 80%,rgba(0,0,0,.08) 100%),linear-gradient(90deg,#5f9c45 0%,#4f8a3a 55%,#2f4a2a 85%,#222622 100%)"></div><div class="t">Electricity Web Emissive</div><div class="st" style="color:#92bc78">Param (1)</div><div class="tri" style="right:3.5px;top:4.5px;border-top:3px solid #e8e8e8"></div><div class="p" style="left:64.3px;top:18.5px;width:4.6px;height:4.6px;background:#f2f2f2"></div><div class="pa" style="left:68.9px;top:19.3px;border-left:2px solid #9a9a9a"></div></div><div class="n" style="left:1129.7px;top:346.7px;width:56.6px;height:61.6px"><div class="h" style="height:8px;background:linear-gradient(180deg,rgba(255,255,255,.07) 0%,rgba(0,0,0,.0) 35%,rgba(0,0,0,.2) 80%,rgba(0,0,0,.08) 100%),linear-gradient(90deg,#5d8b57 0%,#4f7c4a 38%,#2a3329 62%,#1f211f 85%)"></div><div class="t">Multiply</div><div class="tri" style="right:3.5px;top:2.5px;border-bottom:3px solid #e8e8e8"></div><div class="pv" style="left:15.3px;top:21.3px;width:36px;height:36px;background:#020204"></div><div class="p" style="left:2.7px;top:12.5px;width:4.6px;height:4.6px;background:#303230"></div><div class="pa" style="left:7.3px;top:13.3px;border-left:2px solid #303230"></div><div class="l" style="left:10px;top:11.8px">A</div><div class="p" style="left:46.3px;top:12.5px;width:4.6px;height:4.6px;background:#f2f2f2"></div><div class="pa" style="left:50.9px;top:13.3px;border-left:2px solid #9a9a9a"></div><div class="p" style="left:2.7px;top:22.9px;width:4.6px;height:4.6px;background:#303230"></div><div class="pa" style="left:7.3px;top:23.7px;border-left:2px solid #303230"></div><div class="l" style="left:10px;top:22.2px">B</div></div><div class="n" style="left:1201.7px;top:364.7px;width:56.6px;height:61.6px"><div class="h" style="height:8px;background:linear-gradient(180deg,rgba(255,255,255,.07) 0%,rgba(0,0,0,.0) 35%,rgba(0,0,0,.2) 80%,rgba(0,0,0,.08) 100%),linear-gradient(90deg,#5d8b57 0%,#4f7c4a 38%,#2a3329 62%,#1f211f 85%)"></div><div class="t">Multiply</div><div class="tri" style="right:3.5px;top:2.5px;border-bottom:3px solid #e8e8e8"></div><div class="pv" style="left:15.8px;top:21.8px;width:36px;height:35.5px;background:#020203"></div><div class="p" style="left:2.7px;top:12.5px;width:4.6px;height:4.6px;background:#303230"></div><div class="pa" style="left:7.3px;top:13.3px;border-left:2px solid #303230"></div><div class="l" style="left:10px;top:11.8px">A</div><div class="p" style="left:46.3px;top:12.5px;width:4.6px;height:4.6px;background:#f2f2f2"></div><div class="pa" style="left:50.9px;top:13.3px;border-left:2px solid #9a9a9a"></div><div class="p" style="left:2.7px;top:22.9px;width:4.6px;height:4.6px;background:#303230"></div><div class="pa" style="left:7.3px;top:23.7px;border-left:2px solid #303230"></div><div class="l" style="left:10px;top:22.2px">B</div></div><div class="n" style="left:1324.7px;top:419.7px;width:25.6px;height:22.6px"><div class="h" style="height:8px;background:linear-gradient(180deg,rgba(255,255,255,.07) 0%,rgba(0,0,0,.0) 35%,rgba(0,0,0,.2) 80%,rgba(0,0,0,.08) 100%),linear-gradient(90deg,#5d8b57 0%,#4f7c4a 38%,#2a3329 62%,#1f211f 85%)"></div><div class="t">1-x</div><div class="tri" style="right:3.5px;top:2.5px;border-top:3px solid #e8e8e8"></div><div class="p" style="left:2.7px;top:12.5px;width:4.6px;height:4.6px;background:#f2f2f2"></div><div class="pa" style="left:7.3px;top:13.3px;border-left:2px solid #9a9a9a"></div><div class="p" style="left:15.3px;top:12.5px;width:4.6px;height:4.6px;background:#f2f2f2"></div><div class="pa" style="left:19.9px;top:13.3px;border-left:2px solid #9a9a9a"></div></div><div class="n" style="left:1324.7px;top:443.7px;width:55.6px;height:61.1px"><div class="h" style="height:8px;background:linear-gradient(180deg,rgba(255,255,255,.07) 0%,rgba(0,0,0,.0) 35%,rgba(0,0,0,.2) 80%,rgba(0,0,0,.08) 100%),linear-gradient(90deg,#5d8b57 0%,#4f7c4a 38%,#2a3329 62%,#1f211f 85%)"></div><div class="t">Multiply</div><div class="tri" style="right:3.5px;top:2.5px;border-bottom:3px solid #e8e8e8"></div><div class="pv" style="left:15.3px;top:21.3px;width:36.5px;height:36px;background:#ffffff"></div><div class="p" style="left:2.7px;top:12.5px;width:4.6px;height:4.6px;background:#303230"></div><div class="pa" style="left:7.3px;top:13.3px;border-left:2px solid #303230"></div><div class="l" style="left:10px;top:11.8px">A</div><div class="p" style="left:45.3px;top:12.5px;width:4.6px;height:4.6px;background:#f2f2f2"></div><div class="pa" style="left:49.9px;top:13.3px;border-left:2px solid #9a9a9a"></div><div class="p" style="left:2.7px;top:22.9px;width:4.6px;height:4.6px;background:#303230"></div><div class="pa" style="left:7.3px;top:23.7px;border-left:2px solid #303230"></div><div class="l" style="left:10px;top:22.2px">B</div></div><div class="n" style="left:1420.7px;top:401.7px;width:55.6px;height:61.6px"><div class="h" style="height:8px;background:linear-gradient(180deg,rgba(255,255,255,.07) 0%,rgba(0,0,0,.0) 35%,rgba(0,0,0,.2) 80%,rgba(0,0,0,.08) 100%),linear-gradient(90deg,#5d8b57 0%,#4f7c4a 38%,#2a3329 62%,#1f211f 85%)"></div><div class="t">Multiply</div><div class="tri" style="right:3.5px;top:2.5px;border-bottom:3px solid #e8e8e8"></div><div class="pv" style="left:15.3px;top:21.3px;width:36.5px;height:36px;background:#000000"></div><div class="p" style="left:2.7px;top:12.5px;width:4.6px;height:4.6px;background:#303230"></div><div class="pa" style="left:7.3px;top:13.3px;border-left:2px solid #303230"></div><div class="l" style="left:10px;top:11.8px">A</div><div class="p" style="left:45.3px;top:12.5px;width:4.6px;height:4.6px;background:#f2f2f2"></div><div class="pa" style="left:49.9px;top:13.3px;border-left:2px solid #9a9a9a"></div><div class="p" style="left:2.7px;top:22.9px;width:4.6px;height:4.6px;background:#303230"></div><div class="pa" style="left:7.3px;top:23.7px;border-left:2px solid #303230"></div><div class="l" style="left:10px;top:22.2px">B</div></div><div class="n" style="left:1396.7px;top:473.7px;width:56.6px;height:28.1px"><div class="h" style="height:15px;background:linear-gradient(180deg,rgba(255,255,255,.07) 0%,rgba(0,0,0,.0) 35%,rgba(0,0,0,.2) 80%,rgba(0,0,0,.08) 100%),linear-gradient(90deg,#5f9c45 0%,#4f8a3a 55%,#2f4a2a 85%,#222622 100%)"></div><div class="t">Edge Brightness</div><div class="st" style="color:#92bc78">Param (5)</div><div class="tri" style="right:3.5px;top:4.5px;border-top:3px solid #e8e8e8"></div><div class="p" style="left:46.3px;top:18.5px;width:4.6px;height:4.6px;background:#f2f2f2"></div><div class="pa" style="left:50.9px;top:19.3px;border-left:2px solid #9a9a9a"></div></div><div class="n" style="left:1486.7px;top:467.7px;width:36.6px;height:32.6px"><div class="h" style="height:8px;background:linear-gradient(180deg,rgba(255,255,255,.07) 0%,rgba(0,0,0,.0) 35%,rgba(0,0,0,.2) 80%,rgba(0,0,0,.08) 100%),linear-gradient(90deg,#5d8b57 0%,#4f7c4a 38%,#2a3329 62%,#1f211f 85%)"></div><div class="t">Power</div><div class="tri" style="right:3.5px;top:2.5px;border-top:3px solid #e8e8e8"></div><div class="p" style="left:2.7px;top:12.5px;width:4.6px;height:4.6px;background:#f2f2f2"></div><div class="pa" style="left:7.3px;top:13.3px;border-left:2px solid #9a9a9a"></div><div class="l" style="left:10px;top:11.8px">Base</div><div class="p" style="left:26.3px;top:12.5px;width:4.6px;height:4.6px;background:#f2f2f2"></div><div class="pa" style="left:30.9px;top:13.3px;border-left:2px solid #9a9a9a"></div><div class="p" style="left:2.7px;top:22.9px;width:4.6px;height:4.6px;background:#303230"></div><div class="pa" style="left:7.3px;top:23.7px;border-left:2px solid #303230"></div><div class="l" style="left:10px;top:22.2px">Exp</div></div><div class="n" style="left:1528.7px;top:431.7px;width:55.6px;height:61.1px"><div class="h" style="height:8px;background:linear-gradient(180deg,rgba(255,255,255,.07) 0%,rgba(0,0,0,.0) 35%,rgba(0,0,0,.2) 80%,rgba(0,0,0,.08) 100%),linear-gradient(90deg,#5d8b57 0%,#4f7c4a 38%,#2a3329 62%,#1f211f 85%)"></div><div class="t">Add</div><div class="tri" style="right:3.5px;top:2.5px;border-bottom:3px solid #e8e8e8"></div><div class="pv" style="left:15.3px;top:21.3px;width:36.5px;height:36px;background:#ffffff"></div><div class="p" style="left:2.7px;top:12.5px;width:4.6px;height:4.6px;background:#303230"></div><div class="pa" style="left:7.3px;top:13.3px;border-left:2px solid #303230"></div><div class="l" style="left:10px;top:11.8px">A</div><div class="p" style="left:45.3px;top:12.5px;width:4.6px;height:4.6px;background:#f2f2f2"></div><div class="pa" style="left:49.9px;top:13.3px;border-left:2px solid #9a9a9a"></div><div class="p" style="left:2.7px;top:22.9px;width:4.6px;height:4.6px;background:#303230"></div><div class="pa" style="left:7.3px;top:23.7px;border-left:2px solid #303230"></div><div class="l" style="left:10px;top:22.2px">B</div></div><div class="n" style="left:1627.7px;top:472.7px;width:44.6px;height:28.6px"><div class="h" style="height:15px;background:linear-gradient(180deg,rgba(255,255,255,.07) 0%,rgba(0,0,0,.0) 35%,rgba(0,0,0,.2) 80%,rgba(0,0,0,.08) 100%),linear-gradient(90deg,#5f9c45 0%,#4f8a3a 55%,#2f4a2a 85%,#222622 100%)"></div><div class="t">Opacity</div><div class="st" style="color:#92bc78">Param (0.5)</div><div class="tri" style="right:3.5px;top:4.5px;border-top:3px solid #e8e8e8"></div><div class="p" style="left:34.3px;top:18.5px;width:4.6px;height:4.6px;background:#f2f2f2"></div><div class="pa" style="left:38.9px;top:19.3px;border-left:2px solid #9a9a9a"></div></div><div class="n" style="left:517.7px;top:544.7px;width:52.6px;height:28.6px"><div class="h" style="height:15px;background:linear-gradient(180deg,rgba(255,255,255,.07) 0%,rgba(0,0,0,.0) 35%,rgba(0,0,0,.2) 80%,rgba(0,0,0,.08) 100%),linear-gradient(90deg,#b81a1a 0%,#921414 40%,#4a1c1c 75%,#2a1e1e 100%)"></div><div class="t">Camera Vector</div><div class="st" style="color:#e05050">Input Data</div><div class="tri" style="right:3.5px;top:4.5px;border-top:3px solid #e8e8e8"></div><div class="p" style="left:42.3px;top:18.5px;width:4.6px;height:4.6px;background:#f2f2f2"></div><div class="pa" style="left:46.9px;top:19.3px;border-left:2px solid #9a9a9a"></div></div><div class="n" style="left:517.7px;top:574.7px;width:52.6px;height:28.1px"><div class="h" style="height:15px;background:linear-gradient(180deg,rgba(255,255,255,.07) 0%,rgba(0,0,0,.0) 35%,rgba(0,0,0,.2) 80%,rgba(0,0,0,.08) 100%),linear-gradient(90deg,#b81a1a 0%,#921414 40%,#4a1c1c 75%,#2a1e1e 100%)"></div><div class="t">PixelNormalWS</div><div class="st" style="color:#e05050">Input Data</div><div class="tri" style="right:3.5px;top:4.5px;border-top:3px solid #e8e8e8"></div><div class="p" style="left:42.3px;top:18.5px;width:4.6px;height:4.6px;background:#f2f2f2"></div><div class="pa" style="left:46.9px;top:19.3px;border-left:2px solid #9a9a9a"></div></div><div class="n" style="left:517.7px;top:610.7px;width:51.6px;height:28.6px"><div class="h" style="height:15px;background:linear-gradient(180deg,rgba(255,255,255,.07) 0%,rgba(0,0,0,.0) 35%,rgba(0,0,0,.2) 80%,rgba(0,0,0,.08) 100%),linear-gradient(90deg,#5f9c45 0%,#4f8a3a 55%,#2f4a2a 85%,#222622 100%)"></div><div class="t">Fresnel Power</div><div class="st" style="color:#92bc78">Param (3)</div><div class="tri" style="right:3.5px;top:4.5px;border-top:3px solid #e8e8e8"></div><div class="p" style="left:41.3px;top:18.5px;width:4.6px;height:4.6px;background:#f2f2f2"></div><div class="pa" style="left:45.9px;top:19.3px;border-left:2px solid #9a9a9a"></div></div><div class="n" style="left:517.7px;top:646.7px;width:52.6px;height:28.6px"><div class="h" style="height:15px;background:linear-gradient(180deg,rgba(255,255,255,.07) 0%,rgba(0,0,0,.0) 35%,rgba(0,0,0,.2) 80%,rgba(0,0,0,.08) 100%),linear-gradient(90deg,#b81a1a 0%,#921414 40%,#4a1c1c 75%,#2a1e1e 100%)"></div><div class="t">Camera Vector</div><div class="st" style="color:#e05050">Input Data</div><div class="tri" style="right:3.5px;top:4.5px;border-top:3px solid #e8e8e8"></div><div class="p" style="left:42.3px;top:18.5px;width:4.6px;height:4.6px;background:#f2f2f2"></div><div class="pa" style="left:46.9px;top:19.3px;border-left:2px solid #9a9a9a"></div></div><div class="n" style="left:517.7px;top:676.2px;width:52.6px;height:29.1px"><div class="h" style="height:15px;background:linear-gradient(180deg,rgba(255,255,255,.07) 0%,rgba(0,0,0,.0) 35%,rgba(0,0,0,.2) 80%,rgba(0,0,0,.08) 100%),linear-gradient(90deg,#b81a1a 0%,#921414 40%,#4a1c1c 75%,#2a1e1e 100%)"></div><div class="t">PixelNormalWS</div><div class="st" style="color:#e05050">Input Data</div><div class="tri" style="right:3.5px;top:4.5px;border-top:3px solid #e8e8e8"></div><div class="p" style="left:42.3px;top:18.5px;width:4.6px;height:4.6px;background:#f2f2f2"></div><div class="pa" style="left:46.9px;top:19.3px;border-left:2px solid #9a9a9a"></div></div><div class="n" style="left:517.7px;top:712.7px;width:71.6px;height:28.1px"><div class="h" style="height:15px;background:linear-gradient(180deg,rgba(255,255,255,.07) 0%,rgba(0,0,0,.0) 35%,rgba(0,0,0,.2) 80%,rgba(0,0,0,.08) 100%),linear-gradient(90deg,#5f9c45 0%,#4f8a3a 55%,#2f4a2a 85%,#222622 100%)"></div><div class="t">Fresnel Power - centre</div><div class="st" style="color:#92bc78">Param (2)</div><div class="tri" style="right:3.5px;top:4.5px;border-top:3px solid #e8e8e8"></div><div class="p" style="left:61.3px;top:18.5px;width:4.6px;height:4.6px;background:#f2f2f2"></div><div class="pa" style="left:65.9px;top:19.3px;border-left:2px solid #9a9a9a"></div></div><div class="n" style="left:595.2px;top:556.7px;width:29.1px;height:32.6px"><div class="h" style="height:8px;background:linear-gradient(180deg,rgba(255,255,255,.07) 0%,rgba(0,0,0,.0) 35%,rgba(0,0,0,.2) 80%,rgba(0,0,0,.08) 100%),linear-gradient(90deg,#5d8b57 0%,#4f7c4a 38%,#2a3329 62%,#1f211f 85%)"></div><div class="t">Dot</div><div class="tri" style="right:3.5px;top:2.5px;border-top:3px solid #e8e8e8"></div><div class="p" style="left:2.7px;top:12.5px;width:4.6px;height:4.6px;background:#f2f2f2"></div><div class="pa" style="left:7.3px;top:13.3px;border-left:2px solid #9a9a9a"></div><div class="l" style="left:10px;top:11.8px">A</div><div class="p" style="left:18.8px;top:12.5px;width:4.6px;height:4.6px;background:#f2f2f2"></div><div class="pa" style="left:23.4px;top:13.3px;border-left:2px solid #9a9a9a"></div><div class="p" style="left:2.7px;top:22.9px;width:4.6px;height:4.6px;background:#f2f2f2"></div><div class="pa" style="left:7.3px;top:23.7px;border-left:2px solid #9a9a9a"></div><div class="l" style="left:10px;top:22.2px">B</div></div><div class="n" style="left:595.2px;top:646.7px;width:29.1px;height:32.6px"><div class="h" style="height:8px;background:linear-gradient(180deg,rgba(255,255,255,.07) 0%,rgba(0,0,0,.0) 35%,rgba(0,0,0,.2) 80%,rgba(0,0,0,.08) 100%),linear-gradient(90deg,#5d8b57 0%,#4f7c4a 38%,#2a3329 62%,#1f211f 85%)"></div><div class="t">Dot</div><div class="tri" style="right:3.5px;top:2.5px;border-top:3px solid #e8e8e8"></div><div class="p" style="left:2.7px;top:12.5px;width:4.6px;height:4.6px;background:#f2f2f2"></div><div class="pa" style="left:7.3px;top:13.3px;border-left:2px solid #9a9a9a"></div><div class="l" style="left:10px;top:11.8px">A</div><div class="p" style="left:18.8px;top:12.5px;width:4.6px;height:4.6px;background:#f2f2f2"></div><div class="pa" style="left:23.4px;top:13.3px;border-left:2px solid #9a9a9a"></div><div class="p" style="left:2.7px;top:22.9px;width:4.6px;height:4.6px;background:#f2f2f2"></div><div class="pa" style="left:7.3px;top:23.7px;border-left:2px solid #9a9a9a"></div><div class="l" style="left:10px;top:22.2px">B</div></div><div class="n" style="left:631.7px;top:556.7px;width:26.6px;height:22.6px"><div class="h" style="height:8px;background:linear-gradient(180deg,rgba(255,255,255,.07) 0%,rgba(0,0,0,.0) 35%,rgba(0,0,0,.2) 80%,rgba(0,0,0,.08) 100%),linear-gradient(90deg,#5d8b57 0%,#4f7c4a 38%,#2a3329 62%,#1f211f 85%)"></div><div class="t">1-x</div><div class="tri" style="right:3.5px;top:2.5px;border-top:3px solid #e8e8e8"></div><div class="p" style="left:2.7px;top:12.5px;width:4.6px;height:4.6px;background:#f2f2f2"></div><div class="pa" style="left:7.3px;top:13.3px;border-left:2px solid #9a9a9a"></div><div class="p" style="left:16.3px;top:12.5px;width:4.6px;height:4.6px;background:#f2f2f2"></div><div class="pa" style="left:20.9px;top:13.3px;border-left:2px solid #9a9a9a"></div></div><div class="n" style="left:667.7px;top:580.7px;width:37.6px;height:32.6px"><div class="h" style="height:8px;background:linear-gradient(180deg,rgba(255,255,255,.07) 0%,rgba(0,0,0,.0) 35%,rgba(0,0,0,.2) 80%,rgba(0,0,0,.08) 100%),linear-gradient(90deg,#5d8b57 0%,#4f7c4a 38%,#2a3329 62%,#1f211f 85%)"></div><div class="t">Power</div><div class="tri" style="right:3.5px;top:2.5px;border-top:3px solid #e8e8e8"></div><div class="p" style="left:2.7px;top:12.5px;width:4.6px;height:4.6px;background:#f2f2f2"></div><div class="pa" style="left:7.3px;top:13.3px;border-left:2px solid #9a9a9a"></div><div class="l" style="left:10px;top:11.8px">Base</div><div class="p" style="left:27.3px;top:12.5px;width:4.6px;height:4.6px;background:#f2f2f2"></div><div class="pa" style="left:31.9px;top:13.3px;border-left:2px solid #9a9a9a"></div><div class="p" style="left:2.7px;top:22.9px;width:4.6px;height:4.6px;background:#303230"></div><div class="pa" style="left:7.3px;top:23.7px;border-left:2px solid #303230"></div><div class="l" style="left:10px;top:22.2px">Exp</div></div><div class="n" style="left:667.7px;top:640.7px;width:37.6px;height:32.6px"><div class="h" style="height:8px;background:linear-gradient(180deg,rgba(255,255,255,.07) 0%,rgba(0,0,0,.0) 35%,rgba(0,0,0,.2) 80%,rgba(0,0,0,.08) 100%),linear-gradient(90deg,#5d8b57 0%,#4f7c4a 38%,#2a3329 62%,#1f211f 85%)"></div><div class="t">Power</div><div class="tri" style="right:3.5px;top:2.5px;border-top:3px solid #e8e8e8"></div><div class="p" style="left:2.7px;top:12.5px;width:4.6px;height:4.6px;background:#f2f2f2"></div><div class="pa" style="left:7.3px;top:13.3px;border-left:2px solid #9a9a9a"></div><div class="l" style="left:10px;top:11.8px">Base</div><div class="p" style="left:27.3px;top:12.5px;width:4.6px;height:4.6px;background:#f2f2f2"></div><div class="pa" style="left:31.9px;top:13.3px;border-left:2px solid #9a9a9a"></div><div class="p" style="left:2.7px;top:22.9px;width:4.6px;height:4.6px;background:#303230"></div><div class="pa" style="left:7.3px;top:23.7px;border-left:2px solid #303230"></div><div class="l" style="left:10px;top:22.2px">Exp</div></div><div class="n" style="left:727.7px;top:604.7px;width:56.6px;height:61.6px"><div class="h" style="height:8px;background:linear-gradient(180deg,rgba(255,255,255,.07) 0%,rgba(0,0,0,.0) 35%,rgba(0,0,0,.2) 80%,rgba(0,0,0,.08) 100%),linear-gradient(90deg,#5d8b57 0%,#4f7c4a 38%,#2a3329 62%,#1f211f 85%)"></div><div class="t">Add</div><div class="tri" style="right:3.5px;top:2.5px;border-bottom:3px solid #e8e8e8"></div><div class="pv" style="left:15.3px;top:20.8px;width:36.5px;height:36.5px;background:#ff0000"></div><div class="p" style="left:2.7px;top:12.5px;width:4.6px;height:4.6px;background:#303230"></div><div class="pa" style="left:7.3px;top:13.3px;border-left:2px solid #303230"></div><div class="l" style="left:10px;top:11.8px">A</div><div class="p" style="left:46.3px;top:12.5px;width:4.6px;height:4.6px;background:#f2f2f2"></div><div class="pa" style="left:50.9px;top:13.3px;border-left:2px solid #9a9a9a"></div><div class="p" style="left:2.7px;top:22.9px;width:4.6px;height:4.6px;background:#303230"></div><div class="pa" style="left:7.3px;top:23.7px;border-left:2px solid #303230"></div><div class="l" style="left:10px;top:22.2px">B</div></div><div class="n" style="left:727.7px;top:676.7px;width:57.6px;height:28.6px"><div class="h" style="height:15px;background:linear-gradient(180deg,rgba(255,255,255,.07) 0%,rgba(0,0,0,.0) 35%,rgba(0,0,0,.2) 80%,rgba(0,0,0,.08) 100%),linear-gradient(90deg,#5f9c45 0%,#4f8a3a 55%,#2f4a2a 85%,#222622 100%)"></div><div class="t">Fresnel Emissive</div><div class="st" style="color:#92bc78">Param (1)</div><div class="tri" style="right:3.5px;top:4.5px;border-top:3px solid #e8e8e8"></div><div class="p" style="left:47.3px;top:18.5px;width:4.6px;height:4.6px;background:#f2f2f2"></div><div class="pa" style="left:51.9px;top:19.3px;border-left:2px solid #9a9a9a"></div></div><div class="n" style="left:793.7px;top:640.7px;width:35.6px;height:33.1px"><div class="h" style="height:8px;background:linear-gradient(180deg,rgba(255,255,255,.07) 0%,rgba(0,0,0,.0) 35%,rgba(0,0,0,.2) 80%,rgba(0,0,0,.08) 100%),linear-gradient(90deg,#5d8b57 0%,#4f7c4a 38%,#2a3329 62%,#1f211f 85%)"></div><div class="t">Multiply</div><div class="tri" style="right:3.5px;top:2.5px;border-top:3px solid #e8e8e8"></div><div class="p" style="left:2.7px;top:12.5px;width:4.6px;height:4.6px;background:#303230"></div><div class="pa" style="left:7.3px;top:13.3px;border-left:2px solid #303230"></div><div class="l" style="left:10px;top:11.8px">A</div><div class="p" style="left:25.3px;top:12.5px;width:4.6px;height:4.6px;background:#f2f2f2"></div><div class="pa" style="left:29.9px;top:13.3px;border-left:2px solid #9a9a9a"></div><div class="p" style="left:2.7px;top:22.9px;width:4.6px;height:4.6px;background:#303230"></div><div class="pa" style="left:7.3px;top:23.7px;border-left:2px solid #303230"></div><div class="l" style="left:10px;top:22.2px">B</div></div><div class="n" style="left:877.7px;top:658.2px;width:50.6px;height:43.1px"><div class="h" style="height:8px;background:linear-gradient(180deg,rgba(255,255,255,.07) 0%,rgba(0,0,0,.0) 35%,rgba(0,0,0,.2) 80%,rgba(0,0,0,.08) 100%),linear-gradient(90deg,#5d8b57 0%,#4f7c4a 38%,#2a3329 62%,#1f211f 85%)"></div><div class="t">Panner</div><div class="tri" style="right:3.5px;top:2.5px;border-top:3px solid #e8e8e8"></div><div class="p" style="left:3.2px;top:13px;width:3.6px;height:3.6px;background:#0c0c0c;border:0.7px solid #2a2a2a"></div><div class="l" style="left:10px;top:11.8px">Coordinate</div><div class="p" style="left:40.3px;top:12.5px;width:4.6px;height:4.6px;background:#f2f2f2"></div><div class="pa" style="left:44.9px;top:13.3px;border-left:2px solid #9a9a9a"></div><div class="p" style="left:3.2px;top:23.4px;width:3.6px;height:3.6px;background:#0c0c0c;border:0.7px solid #2a2a2a"></div><div class="l" style="left:10px;top:22.2px">Time</div><div class="p" style="left:3.2px;top:33.8px;width:3.6px;height:3.6px;background:#0c0c0c;border:0.7px solid #2a2a2a"></div><div class="l" style="left:10px;top:32.6px">Speed</div></div><div class="n" style="left:943.7px;top:659.2px;width:36.1px;height:32.1px"><div class="h" style="height:8px;background:linear-gradient(180deg,rgba(255,255,255,.07) 0%,rgba(0,0,0,.0) 35%,rgba(0,0,0,.2) 80%,rgba(0,0,0,.08) 100%),linear-gradient(90deg,#5d8b57 0%,#4f7c4a 38%,#2a3329 62%,#1f211f 85%)"></div><div class="t">Append</div><div class="tri" style="right:3.5px;top:2.5px;border-top:3px solid #e8e8e8"></div><div class="p" style="left:2.7px;top:12.5px;width:4.6px;height:4.6px;background:#f2f2f2"></div><div class="pa" style="left:7.3px;top:13.3px;border-left:2px solid #9a9a9a"></div><div class="l" style="left:10px;top:11.8px">A</div><div class="p" style="left:25.8px;top:12.5px;width:4.6px;height:4.6px;background:#f2f2f2"></div><div class="pa" style="left:30.4px;top:13.3px;border-left:2px solid #9a9a9a"></div><div class="p" style="left:2.7px;top:22.9px;width:4.6px;height:4.6px;background:#f2f2f2"></div><div class="pa" style="left:7.3px;top:23.7px;border-left:2px solid #9a9a9a"></div><div class="l" style="left:10px;top:22.2px">B</div></div><div class="n" style="left:985.7px;top:653.2px;width:78.6px;height:68.6px"><div class="h" style="height:15px;background:linear-gradient(180deg,rgba(255,255,255,.07) 0%,rgba(0,0,0,.0) 35%,rgba(0,0,0,.2) 80%,rgba(0,0,0,.08) 100%),linear-gradient(90deg,#5d8b57 0%,#4f7c4a 38%,#2a3329 62%,#1f211f 85%)"></div><div class="t">Noise</div><div class="st" style="color:#8fb47c">Voronoi</div><div class="tri" style="right:3.5px;top:5.5px;border-bottom:3px solid #e8e8e8"></div><svg class="pv" style="left:37.3px;top:27.8px;width:36.5px;height:36.5px;" width="36.5" height="36.5"><rect width="100%" height="100%" fill="#000" filter="url(#fNoise)"/></svg><div class="p" style="left:2.7px;top:18.5px;width:4.6px;height:4.6px;background:#f2f2f2"></div><div class="pa" style="left:7.3px;top:19.3px;border-left:2px solid #9a9a9a"></div><div class="l" style="left:10px;top:17.8px">Position</div><div class="p" style="left:68.3px;top:18.5px;width:4.6px;height:4.6px;background:#f2f2f2"></div><div class="pa" style="left:72.9px;top:19.3px;border-left:2px solid #9a9a9a"></div><div class="p" style="left:2.7px;top:28.9px;width:4.6px;height:4.6px;border:0.9px solid #e6e6e6"></div><div class="pa" style="left:7.3px;top:29.7px;border-left:2px solid #e6e6e6"></div><div class="l" style="left:10px;top:28.2px">FilterWidth</div></div><div class="n" style="left:907.2px;top:711.7px;width:20.1px;height:23.1px"><div class="h" style="height:8px;background:linear-gradient(180deg,rgba(255,255,255,.07) 0%,rgba(0,0,0,.0) 35%,rgba(0,0,0,.2) 80%,rgba(0,0,0,.08) 100%),linear-gradient(90deg,#5d8b57 0%,#4f7c4a 38%,#2a3329 62%,#1f211f 85%)"></div><div class="t">0</div><div class="tri" style="right:3.5px;top:2.5px;border-top:3px solid #e8e8e8"></div><div class="p" style="left:9.8px;top:12.5px;width:4.6px;height:4.6px;background:#f2f2f2"></div><div class="pa" style="left:14.4px;top:13.3px;border-left:2px solid #9a9a9a"></div></div><div class="n" style="left:943.7px;top:731.2px;width:36.1px;height:32.6px"><div class="h" style="height:8px;background:linear-gradient(180deg,rgba(255,255,255,.07) 0%,rgba(0,0,0,.0) 35%,rgba(0,0,0,.2) 80%,rgba(0,0,0,.08) 100%),linear-gradient(90deg,#5d8b57 0%,#4f7c4a 38%,#2a3329 62%,#1f211f 85%)"></div><div class="t">Append</div><div class="tri" style="right:3.5px;top:2.5px;border-top:3px solid #e8e8e8"></div><div class="p" style="left:2.7px;top:12.5px;width:4.6px;height:4.6px;background:#f2f2f2"></div><div class="pa" style="left:7.3px;top:13.3px;border-left:2px solid #9a9a9a"></div><div class="l" style="left:10px;top:11.8px">A</div><div class="p" style="left:25.8px;top:12.5px;width:4.6px;height:4.6px;background:#f2f2f2"></div><div class="pa" style="left:30.4px;top:13.3px;border-left:2px solid #9a9a9a"></div><div class="p" style="left:2.7px;top:22.9px;width:4.6px;height:4.6px;background:#f2f2f2"></div><div class="pa" style="left:7.3px;top:23.7px;border-left:2px solid #9a9a9a"></div><div class="l" style="left:10px;top:22.2px">B</div></div><div class="n" style="left:883.7px;top:742.2px;width:51.1px;height:43.1px"><div class="h" style="height:8px;background:linear-gradient(180deg,rgba(255,255,255,.07) 0%,rgba(0,0,0,.0) 35%,rgba(0,0,0,.2) 80%,rgba(0,0,0,.08) 100%),linear-gradient(90deg,#5d8b57 0%,#4f7c4a 38%,#2a3329 62%,#1f211f 85%)"></div><div class="t">Panner</div><div class="tri" style="right:3.5px;top:2.5px;border-top:3px solid #e8e8e8"></div><div class="p" style="left:3.2px;top:13px;width:3.6px;height:3.6px;background:#0c0c0c;border:0.7px solid #2a2a2a"></div><div class="l" style="left:10px;top:11.8px">Coordinate</div><div class="p" style="left:40.8px;top:12.5px;width:4.6px;height:4.6px;background:#f2f2f2"></div><div class="pa" style="left:45.4px;top:13.3px;border-left:2px solid #9a9a9a"></div><div class="p" style="left:3.2px;top:23.4px;width:3.6px;height:3.6px;background:#0c0c0c;border:0.7px solid #2a2a2a"></div><div class="l" style="left:10px;top:22.2px">Time</div><div class="p" style="left:3.2px;top:33.8px;width:3.6px;height:3.6px;background:#0c0c0c;border:0.7px solid #2a2a2a"></div><div class="l" style="left:10px;top:32.6px">Speed</div></div><div class="n" style="left:985.7px;top:725.2px;width:78.6px;height:68.6px"><div class="h" style="height:15px;background:linear-gradient(180deg,rgba(255,255,255,.07) 0%,rgba(0,0,0,.0) 35%,rgba(0,0,0,.2) 80%,rgba(0,0,0,.08) 100%),linear-gradient(90deg,#5d8b57 0%,#4f7c4a 38%,#2a3329 62%,#1f211f 85%)"></div><div class="t">Noise</div><div class="st" style="color:#8fb47c">Simplex - Texture Based</div><div class="tri" style="right:3.5px;top:5.5px;border-bottom:3px solid #e8e8e8"></div><svg class="pv" style="left:37.3px;top:27.8px;width:36.5px;height:36.5px;" width="36.5" height="36.5"><rect width="100%" height="100%" fill="#000" filter="url(#fNoise2)"/></svg><div class="p" style="left:2.7px;top:18.5px;width:4.6px;height:4.6px;background:#f2f2f2"></div><div class="pa" style="left:7.3px;top:19.3px;border-left:2px solid #9a9a9a"></div><div class="l" style="left:10px;top:17.8px">Position</div><div class="p" style="left:68.3px;top:18.5px;width:4.6px;height:4.6px;background:#f2f2f2"></div><div class="pa" style="left:72.9px;top:19.3px;border-left:2px solid #9a9a9a"></div><div class="p" style="left:2.7px;top:28.9px;width:4.6px;height:4.6px;border:0.9px solid #e6e6e6"></div><div class="pa" style="left:7.3px;top:29.7px;border-left:2px solid #e6e6e6"></div><div class="l" style="left:10px;top:28.2px">FilterWidth</div></div><div class="n" style="left:1099.7px;top:616.2px;width:58.6px;height:29.1px"><div class="h" style="height:15px;background:linear-gradient(180deg,rgba(255,255,255,.07) 0%,rgba(0,0,0,.0) 35%,rgba(0,0,0,.2) 80%,rgba(0,0,0,.08) 100%),linear-gradient(90deg,#5f9c45 0%,#4f8a3a 55%,#2f4a2a 85%,#222622 100%)"></div><div class="t">Sphere Gas width</div><div class="st" style="color:#92bc78">Param (0.005)</div><div class="tri" style="right:3.5px;top:4.5px;border-top:3px solid #e8e8e8"></div><div class="p" style="left:48.3px;top:18.5px;width:4.6px;height:4.6px;background:#f2f2f2"></div><div class="pa" style="left:52.9px;top:19.3px;border-left:2px solid #9a9a9a"></div></div><div class="n" style="left:1183.7px;top:616.2px;width:66.6px;height:29.1px"><div class="h" style="height:15px;background:linear-gradient(180deg,rgba(255,255,255,.07) 0%,rgba(0,0,0,.0) 35%,rgba(0,0,0,.2) 80%,rgba(0,0,0,.08) 100%),linear-gradient(90deg,#5f9c45 0%,#4f8a3a 55%,#2f4a2a 85%,#222622 100%)"></div><div class="t">Sphere Gas strength</div><div class="st" style="color:#92bc78">Param (2)</div><div class="tri" style="right:3.5px;top:4.5px;border-top:3px solid #e8e8e8"></div><div class="p" style="left:56.3px;top:18.5px;width:4.6px;height:4.6px;background:#f2f2f2"></div><div class="pa" style="left:60.9px;top:19.3px;border-left:2px solid #9a9a9a"></div></div><div class="n" style="left:1099.7px;top:652.7px;width:69.6px;height:28.6px"><div class="h" style="height:15px;background:linear-gradient(180deg,rgba(255,255,255,.07) 0%,rgba(0,0,0,.0) 35%,rgba(0,0,0,.2) 80%,rgba(0,0,0,.08) 100%),linear-gradient(90deg,#5f9c45 0%,#4f8a3a 55%,#2f4a2a 85%,#222622 100%)"></div><div class="t">Sphere Gas Hardness</div><div class="st" style="color:#92bc78">Param (0.005)</div><div class="tri" style="right:3.5px;top:4.5px;border-top:3px solid #e8e8e8"></div><div class="p" style="left:59.3px;top:18.5px;width:4.6px;height:4.6px;background:#f2f2f2"></div><div class="pa" style="left:63.9px;top:19.3px;border-left:2px solid #9a9a9a"></div></div><div class="n" style="left:1069.7px;top:682.7px;width:45.6px;height:22.1px"><div class="h" style="height:8px;background:linear-gradient(180deg,rgba(255,255,255,.07) 0%,rgba(0,0,0,.0) 35%,rgba(0,0,0,.2) 80%,rgba(0,0,0,.08) 100%),linear-gradient(90deg,#b81a1a 0%,#921414 40%,#4a1c1c 75%,#2a1e1e 100%)"></div><div class="t">TexCoord[0]</div><div class="tri" style="right:3.5px;top:2.5px;border-top:3px solid #e8e8e8"></div><div class="p" style="left:35.3px;top:12.5px;width:4.6px;height:4.6px;background:#f2f2f2"></div><div class="pa" style="left:39.9px;top:13.3px;border-left:2px solid #9a9a9a"></div></div><div class="n" style="left:1075.7px;top:706.7px;width:35.6px;height:32.1px"><div class="h" style="height:8px;background:linear-gradient(180deg,rgba(255,255,255,.07) 0%,rgba(0,0,0,.0) 35%,rgba(0,0,0,.2) 80%,rgba(0,0,0,.08) 100%),linear-gradient(90deg,#5d8b57 0%,#4f7c4a 38%,#2a3329 62%,#1f211f 85%)"></div><div class="t">Append</div><div class="tri" style="right:3.5px;top:2.5px;border-top:3px solid #e8e8e8"></div><div class="p" style="left:2.7px;top:12.5px;width:4.6px;height:4.6px;background:#f2f2f2"></div><div class="pa" style="left:7.3px;top:13.3px;border-left:2px solid #9a9a9a"></div><div class="l" style="left:10px;top:11.8px">A</div><div class="p" style="left:25.3px;top:12.5px;width:4.6px;height:4.6px;background:#f2f2f2"></div><div class="pa" style="left:29.9px;top:13.3px;border-left:2px solid #9a9a9a"></div><div class="p" style="left:2.7px;top:22.9px;width:4.6px;height:4.6px;background:#f2f2f2"></div><div class="pa" style="left:7.3px;top:23.7px;border-left:2px solid #9a9a9a"></div><div class="l" style="left:10px;top:22.2px">B</div></div><div class="n" style="left:1123.7px;top:682.7px;width:56.6px;height:61.1px"><div class="h" style="height:8px;background:linear-gradient(180deg,rgba(255,255,255,.07) 0%,rgba(0,0,0,.0) 35%,rgba(0,0,0,.2) 80%,rgba(0,0,0,.08) 100%),linear-gradient(90deg,#5d8b57 0%,#4f7c4a 38%,#2a3329 62%,#1f211f 85%)"></div><div class="t">Add</div><div class="tri" style="right:3.5px;top:2.5px;border-bottom:3px solid #e8e8e8"></div><div class="pv" style="left:15.3px;top:20.8px;width:36.5px;height:36.5px;background:linear-gradient(to right,rgba(255,240,0,0) 0%,rgba(255,230,0,.85) 100%),linear-gradient(to bottom,#ff3000 0%,#c0b000 50%,#00e000 100%)"></div><div class="p" style="left:2.7px;top:12.5px;width:4.6px;height:4.6px;background:#303230"></div><div class="pa" style="left:7.3px;top:13.3px;border-left:2px solid #303230"></div><div class="l" style="left:10px;top:11.8px">A</div><div class="p" style="left:46.3px;top:12.5px;width:4.6px;height:4.6px;background:#f2f2f2"></div><div class="pa" style="left:50.9px;top:13.3px;border-left:2px solid #9a9a9a"></div><div class="p" style="left:2.7px;top:22.9px;width:4.6px;height:4.6px;background:#303230"></div><div class="pa" style="left:7.3px;top:23.7px;border-left:2px solid #303230"></div><div class="l" style="left:10px;top:22.2px">B</div></div><div class="n" style="left:1189.7px;top:653.2px;width:92.6px;height:73.1px"><div class="h" style="height:8px;background:linear-gradient(180deg,rgba(255,255,255,.07) 0%,rgba(0,0,0,.0) 35%,rgba(0,0,0,.2) 80%,rgba(0,0,0,.08) 100%),linear-gradient(90deg,#3a78a6 0%,#30688f 40%,#27384a 70%,#1f2224 95%)"></div><div class="t">GeneratedBand</div><div class="p" style="left:2.7px;top:12.5px;width:4.6px;height:4.6px;background:#303230"></div><div class="pa" style="left:7.3px;top:13.3px;border-left:2px solid #303230"></div><div class="l" style="left:10px;top:11.8px">Width (S)</div><div class="p" style="left:82.3px;top:12.5px;width:4.6px;height:4.6px;background:#f2f2f2"></div><div class="pa" style="left:86.9px;top:13.3px;border-left:2px solid #9a9a9a"></div><div class="l lr" style="right:12px;top:11.8px">Result</div><div class="p" style="left:2.7px;top:22.9px;width:4.6px;height:4.6px;background:#303230"></div><div class="pa" style="left:7.3px;top:23.7px;border-left:2px solid #303230"></div><div class="l" style="left:10px;top:22.2px">Sharpness (S)</div><div class="p" style="left:3.2px;top:33.8px;width:3.6px;height:3.6px;background:#0c0c0c;border:0.7px solid #2a2a2a"></div><div class="l" style="left:10px;top:32.6px">Offset (S)</div><div class="p" style="left:3.2px;top:44.2px;width:3.6px;height:3.6px;background:#0c0c0c;border:0.7px solid #2a2a2a"></div><div class="l" style="left:10px;top:43px">Direction Switch (B)</div><div class="p" style="left:3.2px;top:54.6px;width:3.6px;height:3.6px;background:#0c0c0c;border:0.7px solid #2a2a2a"></div><div class="l" style="left:10px;top:53.4px">Compare (S)</div><div class="p" style="left:2.7px;top:64.5px;width:4.6px;height:4.6px;background:#303230"></div><div class="pa" style="left:7.3px;top:65.3px;border-left:2px solid #303230"></div><div class="l" style="left:10px;top:63.8px">Input Coordinates (V2)</div></div><div class="n" style="left:1267.7px;top:544.7px;width:85.6px;height:70.6px"><div class="h" style="height:15px;background:linear-gradient(180deg,rgba(255,255,255,.07) 0%,rgba(0,0,0,.0) 35%,rgba(0,0,0,.2) 80%,rgba(0,0,0,.08) 100%),linear-gradient(90deg,#a4862e 0%,#8a6e22 50%,#4a4020 80%,#2a2820 100%)"></div><div class="t">Sphere Gas Colour</div><div class="st" style="color:#e8c060">Param (0.625,0.071,0.0959,1)</div><div class="tri" style="right:3.5px;top:5.5px;border-bottom:3px solid #e8e8e8"></div><div class="pv" style="left:2.8px;top:17.3px;width:35.5px;height:35.5px;background:#d4505c"></div><div class="p" style="left:75.3px;top:18.5px;width:4.6px;height:4.6px;background:#f2f2f2"></div><div class="pa" style="left:79.9px;top:19.3px;border-left:2px solid #9a9a9a"></div><div class="p" style="left:75.3px;top:28.9px;width:4.6px;height:4.6px;border:0.9px solid #e01010"></div><div class="pa" style="left:79.9px;top:29.7px;border-left:2px solid #e01010"></div><div class="p" style="left:75.3px;top:39.3px;width:4.6px;height:4.6px;border:0.9px solid #10d010"></div><div class="pa" style="left:79.9px;top:40.1px;border-left:2px solid #10d010"></div><div class="p" style="left:75.3px;top:49.7px;width:4.6px;height:4.6px;background:#101080"></div><div class="pa" style="left:79.9px;top:50.5px;border-left:2px solid #101080"></div><div class="p" style="left:75.3px;top:60.1px;width:4.6px;height:4.6px;border:0.9px solid #e6e6e6"></div><div class="pa" style="left:79.9px;top:60.9px;border-left:2px solid #e6e6e6"></div></div><div class="n" style="left:1279.7px;top:622.7px;width:66.6px;height:61.6px"><div class="h" style="height:8px;background:linear-gradient(180deg,rgba(255,255,255,.07) 0%,rgba(0,0,0,.0) 35%,rgba(0,0,0,.2) 80%,rgba(0,0,0,.08) 100%),linear-gradient(90deg,#5d8b57 0%,#4f7c4a 38%,#2a3329 62%,#1f211f 85%)"></div><div class="t">Lerp(0,)</div><div class="tri" style="right:3.5px;top:2.5px;border-bottom:3px solid #e8e8e8"></div><div class="pv" style="left:25.3px;top:21.3px;width:36px;height:36px;background:#000"><div style="position:absolute;left:8px;top:8px;width:1px;height:1px;background:#d02020"></div><div style="position:absolute;left:18px;top:9px;width:1px;height:1px;background:#d02020"></div><div style="position:absolute;left:22px;top:8px;width:1px;height:1px;background:#d02020"></div><div style="position:absolute;left:27px;top:20px;width:1px;height:1px;background:#d02020"></div><div style="position:absolute;left:12px;top:27px;width:1px;height:1px;background:#d02020"></div><div style="position:absolute;left:20px;top:25px;width:1px;height:1px;background:#d02020"></div><div style="position:absolute;left:30px;top:28px;width:1px;height:1px;background:#d02020"></div><div style="position:absolute;left:24px;top:30px;width:1px;height:1px;background:#d02020"></div></div><div class="p" style="left:3.2px;top:13px;width:3.6px;height:3.6px;background:#0c0c0c;border:0.7px solid #2a2a2a"></div><div class="l" style="left:10px;top:11.8px">A</div><div class="p" style="left:56.3px;top:12.5px;width:4.6px;height:4.6px;background:#f2f2f2"></div><div class="pa" style="left:60.9px;top:13.3px;border-left:2px solid #9a9a9a"></div><div class="p" style="left:2.7px;top:22.9px;width:4.6px;height:4.6px;background:#303230"></div><div class="pa" style="left:7.3px;top:23.7px;border-left:2px solid #303230"></div><div class="l" style="left:10px;top:22.2px">B</div><div class="p" style="left:2.7px;top:33.3px;width:4.6px;height:4.6px;background:#303230"></div><div class="pa" style="left:7.3px;top:34.1px;border-left:2px solid #303230"></div><div class="l" style="left:10px;top:32.6px">Alpha</div></div><div class="n" style="left:1369.7px;top:551.2px;width:35.6px;height:32.1px"><div class="h" style="height:8px;background:linear-gradient(180deg,rgba(255,255,255,.07) 0%,rgba(0,0,0,.0) 35%,rgba(0,0,0,.2) 80%,rgba(0,0,0,.08) 100%),linear-gradient(90deg,#5d8b57 0%,#4f7c4a 38%,#2a3329 62%,#1f211f 85%)"></div><div class="t">Multiply</div><div class="tri" style="right:3.5px;top:2.5px;border-top:3px solid #e8e8e8"></div><div class="p" style="left:2.7px;top:12.5px;width:4.6px;height:4.6px;background:#303230"></div><div class="pa" style="left:7.3px;top:13.3px;border-left:2px solid #303230"></div><div class="l" style="left:10px;top:11.8px">A</div><div class="p" style="left:25.3px;top:12.5px;width:4.6px;height:4.6px;background:#f2f2f2"></div><div class="pa" style="left:29.9px;top:13.3px;border-left:2px solid #9a9a9a"></div><div class="p" style="left:2.7px;top:22.9px;width:4.6px;height:4.6px;background:#303230"></div><div class="pa" style="left:7.3px;top:23.7px;border-left:2px solid #303230"></div><div class="l" style="left:10px;top:22.2px">B</div></div><div class="n" style="left:1459.7px;top:580.7px;width:45.6px;height:22.1px"><div class="h" style="height:8px;background:linear-gradient(180deg,rgba(255,255,255,.07) 0%,rgba(0,0,0,.0) 35%,rgba(0,0,0,.2) 80%,rgba(0,0,0,.08) 100%),linear-gradient(90deg,#b81a1a 0%,#921414 40%,#4a1c1c 75%,#2a1e1e 100%)"></div><div class="t">TexCoord[0]</div><div class="tri" style="right:3.5px;top:2.5px;border-top:3px solid #e8e8e8"></div><div class="p" style="left:35.3px;top:12.5px;width:4.6px;height:4.6px;background:#f2f2f2"></div><div class="pa" style="left:39.9px;top:13.3px;border-left:2px solid #9a9a9a"></div></div><div class="n" style="left:1459.7px;top:610.7px;width:48.6px;height:28.6px"><div class="h" style="height:15px;background:linear-gradient(180deg,rgba(255,255,255,.07) 0%,rgba(0,0,0,.0) 35%,rgba(0,0,0,.2) 80%,rgba(0,0,0,.08) 100%),linear-gradient(90deg,#5f9c45 0%,#4f8a3a 55%,#2f4a2a 85%,#222622 100%)"></div><div class="t">Normal Scale</div><div class="st" style="color:#92bc78">Param (1)</div><div class="tri" style="right:3.5px;top:4.5px;border-top:3px solid #e8e8e8"></div><div class="p" style="left:38.3px;top:18.5px;width:4.6px;height:4.6px;background:#f2f2f2"></div><div class="pa" style="left:42.9px;top:19.3px;border-left:2px solid #9a9a9a"></div></div><div class="n" style="left:1513.7px;top:592.7px;width:35.6px;height:32.6px"><div class="h" style="height:8px;background:linear-gradient(180deg,rgba(255,255,255,.07) 0%,rgba(0,0,0,.0) 35%,rgba(0,0,0,.2) 80%,rgba(0,0,0,.08) 100%),linear-gradient(90deg,#5d8b57 0%,#4f7c4a 38%,#2a3329 62%,#1f211f 85%)"></div><div class="t">Multiply</div><div class="tri" style="right:3.5px;top:2.5px;border-top:3px solid #e8e8e8"></div><div class="p" style="left:2.7px;top:12.5px;width:4.6px;height:4.6px;background:#303230"></div><div class="pa" style="left:7.3px;top:13.3px;border-left:2px solid #303230"></div><div class="l" style="left:10px;top:11.8px">A</div><div class="p" style="left:25.3px;top:12.5px;width:4.6px;height:4.6px;background:#f2f2f2"></div><div class="pa" style="left:29.9px;top:13.3px;border-left:2px solid #9a9a9a"></div><div class="p" style="left:2.7px;top:22.9px;width:4.6px;height:4.6px;background:#303230"></div><div class="pa" style="left:7.3px;top:23.7px;border-left:2px solid #303230"></div><div class="l" style="left:10px;top:22.2px">B</div></div><div class="n" style="left:1555.7px;top:575.2px;width:51.6px;height:31.6px"><div class="h" style="height:8px;background:linear-gradient(180deg,rgba(255,255,255,.07) 0%,rgba(0,0,0,.0) 35%,rgba(0,0,0,.2) 80%,rgba(0,0,0,.08) 100%),linear-gradient(90deg,#5d8b57 0%,#4f7c4a 38%,#2a3329 62%,#1f211f 85%)"></div><div class="t">Rotator</div><div class="tri" style="right:3.5px;top:2.5px;border-top:3px solid #e8e8e8"></div><div class="p" style="left:2.7px;top:12.5px;width:4.6px;height:4.6px;background:#303230"></div><div class="pa" style="left:7.3px;top:13.3px;border-left:2px solid #303230"></div><div class="l" style="left:10px;top:11.8px">Coordinate</div><div class="p" style="left:41.3px;top:12.5px;width:4.6px;height:4.6px;background:#f2f2f2"></div><div class="pa" style="left:45.9px;top:13.3px;border-left:2px solid #9a9a9a"></div><div class="p" style="left:2.7px;top:22.9px;width:4.6px;height:4.6px;background:#303230"></div><div class="pa" style="left:7.3px;top:23.7px;border-left:2px solid #303230"></div><div class="l" style="left:10px;top:22.2px">Time</div></div><div class="n" style="left:1555.7px;top:610.7px;width:51.6px;height:43.6px"><div class="h" style="height:8px;background:linear-gradient(180deg,rgba(255,255,255,.07) 0%,rgba(0,0,0,.0) 35%,rgba(0,0,0,.2) 80%,rgba(0,0,0,.08) 100%),linear-gradient(90deg,#5d8b57 0%,#4f7c4a 38%,#2a3329 62%,#1f211f 85%)"></div><div class="t">Panner</div><div class="tri" style="right:3.5px;top:2.5px;border-top:3px solid #e8e8e8"></div><div class="p" style="left:2.7px;top:12.5px;width:4.6px;height:4.6px;background:#303230"></div><div class="pa" style="left:7.3px;top:13.3px;border-left:2px solid #303230"></div><div class="l" style="left:10px;top:11.8px">Coordinate</div><div class="p" style="left:41.3px;top:12.5px;width:4.6px;height:4.6px;background:#f2f2f2"></div><div class="pa" style="left:45.9px;top:13.3px;border-left:2px solid #9a9a9a"></div><div class="p" style="left:3.2px;top:23.4px;width:3.6px;height:3.6px;background:#0c0c0c;border:0.7px solid #2a2a2a"></div><div class="l" style="left:10px;top:22.2px">Time</div><div class="p" style="left:3.2px;top:33.8px;width:3.6px;height:3.6px;background:#0c0c0c;border:0.7px solid #2a2a2a"></div><div class="l" style="left:10px;top:32.6px">Speed</div></div><div class="n" style="left:1621.7px;top:544.7px;width:80.6px;height:82.6px"><div class="h" style="height:8px;background:linear-gradient(180deg,rgba(255,255,255,.07) 0%,rgba(0,0,0,.0) 35%,rgba(0,0,0,.2) 80%,rgba(0,0,0,.08) 100%),linear-gradient(90deg,#3a78a6 0%,#30688f 40%,#27384a 70%,#1f2224 95%)"></div><div class="t">Texture Sample</div><div class="tri" style="right:3.5px;top:2.5px;border-bottom:3px solid #e8e8e8"></div><svg class="pv" style="left:1.8px;top:42.3px;width:37px;height:36.5px;background:#1a2aff" width="37" height="36.5"><rect width="100%" height="100%" fill="#00f" filter="url(#fNrm)"/></svg><div class="p" style="left:2.7px;top:12.5px;width:4.6px;height:4.6px;background:#303230"></div><div class="pa" style="left:7.3px;top:13.3px;border-left:2px solid #303230"></div><div class="l" style="left:10px;top:11.8px">UVs</div><div class="p" style="left:70.3px;top:12.5px;width:4.6px;height:4.6px;background:#f2f2f2"></div><div class="pa" style="left:74.9px;top:13.3px;border-left:2px solid #9a9a9a"></div><div class="l lr" style="right:12px;top:11.8px">RGB</div><div class="p" style="left:3.2px;top:23.4px;width:3.6px;height:3.6px;background:#0c0c0c;border:0.7px solid #2a2a2a"></div><div class="l" style="left:10px;top:22.2px">Tex</div><div class="p" style="left:70.3px;top:22.9px;width:4.6px;height:4.6px;border:0.9px solid #e01010"></div><div class="pa" style="left:74.9px;top:23.7px;border-left:2px solid #e01010"></div><div class="l lr" style="right:12px;top:22.2px">R</div><div class="p" style="left:3.2px;top:33.8px;width:3.6px;height:3.6px;background:#0c0c0c;border:0.7px solid #2a2a2a"></div><div class="l" style="left:10px;top:32.6px">Apply View MipBias</div><div class="p" style="left:70.3px;top:33.3px;width:4.6px;height:4.6px;border:0.9px solid #10d010"></div><div class="pa" style="left:74.9px;top:34.1px;border-left:2px solid #10d010"></div><div class="l lr" style="right:12px;top:32.6px">G</div><div class="p" style="left:70.3px;top:43.7px;width:4.6px;height:4.6px;background:#101080"></div><div class="pa" style="left:74.9px;top:44.5px;border-left:2px solid #101080"></div><div class="l lr" style="right:12px;top:43px">B</div><div class="p" style="left:70.3px;top:54.1px;width:4.6px;height:4.6px;border:0.9px solid #e6e6e6"></div><div class="pa" style="left:74.9px;top:54.9px;border-left:2px solid #e6e6e6"></div><div class="l lr" style="right:12px;top:53.4px">A</div><div class="p" style="left:70.3px;top:64.5px;width:4.6px;height:4.6px;border:0.9px solid #e6e6e6"></div><div class="pa" style="left:74.9px;top:65.3px;border-left:2px solid #e6e6e6"></div><div class="l lr" style="right:12px;top:63.8px">RGBA</div></div><div class="n" style="left:1621.7px;top:634.7px;width:80.6px;height:82.6px"><div class="h" style="height:8px;background:linear-gradient(180deg,rgba(255,255,255,.07) 0%,rgba(0,0,0,.0) 35%,rgba(0,0,0,.2) 80%,rgba(0,0,0,.08) 100%),linear-gradient(90deg,#3a78a6 0%,#30688f 40%,#27384a 70%,#1f2224 95%)"></div><div class="t">Texture Sample</div><div class="tri" style="right:3.5px;top:2.5px;border-bottom:3px solid #e8e8e8"></div><svg class="pv" style="left:1.8px;top:41.8px;width:37px;height:37px;background:#1a2aff" width="37" height="37"><rect width="100%" height="100%" fill="#00f" filter="url(#fNrm)"/></svg><div class="p" style="left:2.7px;top:12.5px;width:4.6px;height:4.6px;background:#303230"></div><div class="pa" style="left:7.3px;top:13.3px;border-left:2px solid #303230"></div><div class="l" style="left:10px;top:11.8px">UVs</div><div class="p" style="left:70.3px;top:12.5px;width:4.6px;height:4.6px;background:#f2f2f2"></div><div class="pa" style="left:74.9px;top:13.3px;border-left:2px solid #9a9a9a"></div><div class="l lr" style="right:12px;top:11.8px">RGB</div><div class="p" style="left:3.2px;top:23.4px;width:3.6px;height:3.6px;background:#0c0c0c;border:0.7px solid #2a2a2a"></div><div class="l" style="left:10px;top:22.2px">Tex</div><div class="p" style="left:70.3px;top:22.9px;width:4.6px;height:4.6px;border:0.9px solid #e01010"></div><div class="pa" style="left:74.9px;top:23.7px;border-left:2px solid #e01010"></div><div class="l lr" style="right:12px;top:22.2px">R</div><div class="p" style="left:3.2px;top:33.8px;width:3.6px;height:3.6px;background:#0c0c0c;border:0.7px solid #2a2a2a"></div><div class="l" style="left:10px;top:32.6px">Apply View MipBias</div><div class="p" style="left:70.3px;top:33.3px;width:4.6px;height:4.6px;border:0.9px solid #10d010"></div><div class="pa" style="left:74.9px;top:34.1px;border-left:2px solid #10d010"></div><div class="l lr" style="right:12px;top:32.6px">G</div><div class="p" style="left:70.3px;top:43.7px;width:4.6px;height:4.6px;background:#101080"></div><div class="pa" style="left:74.9px;top:44.5px;border-left:2px solid #101080"></div><div class="l lr" style="right:12px;top:43px">B</div><div class="p" style="left:70.3px;top:54.1px;width:4.6px;height:4.6px;border:0.9px solid #e6e6e6"></div><div class="pa" style="left:74.9px;top:54.9px;border-left:2px solid #e6e6e6"></div><div class="l lr" style="right:12px;top:53.4px">A</div><div class="p" style="left:70.3px;top:64.5px;width:4.6px;height:4.6px;border:0.9px solid #e6e6e6"></div><div class="pa" style="left:74.9px;top:65.3px;border-left:2px solid #e6e6e6"></div><div class="l lr" style="right:12px;top:63.8px">RGBA</div></div><div class="n" style="left:1717.7px;top:550.7px;width:57.1px;height:61.6px"><div class="h" style="height:8px;background:linear-gradient(180deg,rgba(255,255,255,.07) 0%,rgba(0,0,0,.0) 35%,rgba(0,0,0,.2) 80%,rgba(0,0,0,.08) 100%),linear-gradient(90deg,#5d8b57 0%,#4f7c4a 38%,#2a3329 62%,#1f211f 85%)"></div><div class="t">Add</div><div class="tri" style="right:3.5px;top:2.5px;border-bottom:3px solid #e8e8e8"></div><svg class="pv" style="left:15.3px;top:20.8px;width:36.5px;height:37.5px;background:#1a2aff" width="36.5" height="37.5"><rect width="100%" height="100%" fill="#00f" filter="url(#fNrm)"/></svg><div class="p" style="left:2.7px;top:12.5px;width:4.6px;height:4.6px;background:#303230"></div><div class="pa" style="left:7.3px;top:13.3px;border-left:2px solid #303230"></div><div class="l" style="left:10px;top:11.8px">A</div><div class="p" style="left:46.8px;top:12.5px;width:4.6px;height:4.6px;background:#f2f2f2"></div><div class="pa" style="left:51.4px;top:13.3px;border-left:2px solid #9a9a9a"></div><div class="p" style="left:2.7px;top:22.9px;width:4.6px;height:4.6px;background:#303230"></div><div class="pa" style="left:7.3px;top:23.7px;border-left:2px solid #303230"></div><div class="l" style="left:10px;top:22.2px">B</div></div><div class="n" style="left:1459.7px;top:796.7px;width:61.6px;height:28.6px"><div class="h" style="height:15px;background:linear-gradient(180deg,rgba(255,255,255,.07) 0%,rgba(0,0,0,.0) 35%,rgba(0,0,0,.2) 80%,rgba(0,0,0,.08) 100%),linear-gradient(90deg,#5f9c45 0%,#4f8a3a 55%,#2f4a2a 85%,#222622 100%)"></div><div class="t">Refraction Amount</div><div class="st" style="color:#92bc78">Param (0.5)</div><div class="tri" style="right:3.5px;top:4.5px;border-top:3px solid #e8e8e8"></div><div class="p" style="left:51.3px;top:18.5px;width:4.6px;height:4.6px;background:#f2f2f2"></div><div class="pa" style="left:55.9px;top:19.3px;border-left:2px solid #9a9a9a"></div></div><div class="n" style="left:1537.7px;top:772.7px;width:37.6px;height:32.6px"><div class="h" style="height:8px;background:linear-gradient(180deg,rgba(255,255,255,.07) 0%,rgba(0,0,0,.0) 35%,rgba(0,0,0,.2) 80%,rgba(0,0,0,.08) 100%),linear-gradient(90deg,#5d8b57 0%,#4f7c4a 38%,#2a3329 62%,#1f211f 85%)"></div><div class="t">Power</div><div class="tri" style="right:3.5px;top:2.5px;border-top:3px solid #e8e8e8"></div><div class="p" style="left:2.7px;top:12.5px;width:4.6px;height:4.6px;background:#f2f2f2"></div><div class="pa" style="left:7.3px;top:13.3px;border-left:2px solid #9a9a9a"></div><div class="l" style="left:10px;top:11.8px">Base</div><div class="p" style="left:27.3px;top:12.5px;width:4.6px;height:4.6px;background:#f2f2f2"></div><div class="pa" style="left:31.9px;top:13.3px;border-left:2px solid #9a9a9a"></div><div class="p" style="left:2.7px;top:22.9px;width:4.6px;height:4.6px;background:#303230"></div><div class="pa" style="left:7.3px;top:23.7px;border-left:2px solid #303230"></div><div class="l" style="left:10px;top:22.2px">Exp</div></div><div style="position:absolute;left:1800.7px;top:428.7px;width:69.8px;height:203.3px;background:#161616;border:1.5px solid #e09a2a;border-radius:3px;box-shadow:0 0 2px #000"><div style="position:absolute;left:0.5px;top:0.5px;right:0.5px;height:9.5px;background:linear-gradient(180deg,rgba(255,255,255,.06),rgba(0,0,0,.15)),linear-gradient(90deg,#847a6e,#625c54 50%,#2e2e2e)"></div><div class="t" style="left:5px;top:2px">M_MagicSphere</div><div class="p" style="left:3.7px;top:13.3px;width:4.6px;height:4.6px;background:#f2f2f2"></div><div class="pa" style="left:8.3px;top:14.1px;border-left:2px solid #9a9a9a"></div><div class="l" style="left:12px;top:12.6px;color:#f0f0f0">Base Color</div><div class="p" style="left:3.5px;top:23.63px;width:5px;height:5px;border:0.8px solid #3a3a3a"></div><div class="l" style="left:12px;top:23.13px;color:#3a3a3a">Metallic</div><div class="p" style="left:3.5px;top:34.16px;width:5px;height:5px;border:0.8px solid #3a3a3a"></div><div class="l" style="left:12px;top:33.66px;color:#3a3a3a">Specular</div><div class="p" style="left:3.5px;top:44.69px;width:5px;height:5px;border:0.8px solid #3a3a3a"></div><div class="l" style="left:12px;top:44.19px;color:#3a3a3a">Roughness</div><div class="p" style="left:3.7px;top:55.42px;width:4.6px;height:4.6px;background:#f2f2f2"></div><div class="pa" style="left:8.3px;top:56.22px;border-left:2px solid #9a9a9a"></div><div class="l" style="left:12px;top:54.72px;color:#f0f0f0">Emissive Color</div><div class="p" style="left:3.7px;top:65.95px;width:4.6px;height:4.6px;background:#f2f2f2"></div><div class="pa" style="left:8.3px;top:66.75px;border-left:2px solid #9a9a9a"></div><div class="l" style="left:12px;top:65.25px;color:#f0f0f0">Opacity</div><div class="p" style="left:3.5px;top:76.28px;width:5px;height:5px;border:0.8px solid #3a3a3a"></div><div class="l" style="left:12px;top:75.78px;color:#3a3a3a">Opacity Mask</div><div class="p" style="left:3.7px;top:87.01px;width:4.6px;height:4.6px;background:#f2f2f2"></div><div class="pa" style="left:8.3px;top:87.81px;border-left:2px solid #9a9a9a"></div><div class="l" style="left:12px;top:86.31px;color:#f0f0f0">Normal</div><div class="p" style="left:3.7px;top:97.54px;width:4.6px;height:4.6px;background:#f2f2f2"></div><div class="pa" style="left:8.3px;top:98.34px;border-left:2px solid #9a9a9a"></div><div class="l" style="left:12px;top:96.84px;color:#f0f0f0">World Position Offset</div><div class="p" style="left:3.5px;top:107.87px;width:5px;height:5px;border:0.8px solid #3a3a3a"></div><div class="l" style="left:12px;top:107.37px;color:#3a3a3a">World Displacement</div><div class="p" style="left:3.5px;top:118.4px;width:5px;height:5px;border:0.8px solid #3a3a3a"></div><div class="l" style="left:12px;top:117.9px;color:#3a3a3a">Tessellation Multiplier</div><div class="p" style="left:3.5px;top:128.93px;width:5px;height:5px;border:0.8px solid #3a3a3a"></div><div class="l" style="left:12px;top:128.43px;color:#3a3a3a">Subsurface Color</div><div class="p" style="left:3.5px;top:139.46px;width:5px;height:5px;border:0.8px solid #3a3a3a"></div><div class="l" style="left:12px;top:138.96px;color:#3a3a3a">Custom Data 0</div><div class="p" style="left:3.5px;top:149.99px;width:5px;height:5px;border:0.8px solid #3a3a3a"></div><div class="l" style="left:12px;top:149.49px;color:#3a3a3a">Custom Data 1</div><div class="p" style="left:3.7px;top:160.72px;width:4.6px;height:4.6px;border:0.9px solid #e8e8e8"></div><div class="pa" style="left:8.3px;top:161.52px;border-left:2px solid #e8e8e8"></div><div class="l" style="left:12px;top:160.02px;color:#f0f0f0">Ambient Occlusion</div><div class="p" style="left:3.7px;top:171.25px;width:4.6px;height:4.6px;background:#f2f2f2"></div><div class="pa" style="left:8.3px;top:172.05px;border-left:2px solid #9a9a9a"></div><div class="l" style="left:12px;top:170.55px;color:#f0f0f0">Refraction</div><div class="p" style="left:3.5px;top:181.58px;width:5px;height:5px;border:0.8px solid #3a3a3a"></div><div class="l" style="left:12px;top:181.08px;color:#3a3a3a">Pixel Depth Offset</div><div class="p" style="left:3.5px;top:192.11px;width:5px;height:5px;border:0.8px solid #3a3a3a"></div><div class="l" style="left:12px;top:191.61px;color:#3a3a3a">Shading Model</div></div><div style="position:absolute;left:1838px;top:-1px;font-size:21.5px;font-weight:bold;color:#6a6a6a;white-space:nowrap;transform:scaleX(.833);transform-origin:0 0">Zoom -5</div><div style="position:absolute;left:1641px;top:920px;font-size:67px;font-weight:bold;color:#fff;-webkit-text-stroke:1.2px #fff;opacity:.2;white-space:nowrap;transform:scaleX(.764);transform-origin:0 0;line-height:76px">MATERIAL</div></body></html>
